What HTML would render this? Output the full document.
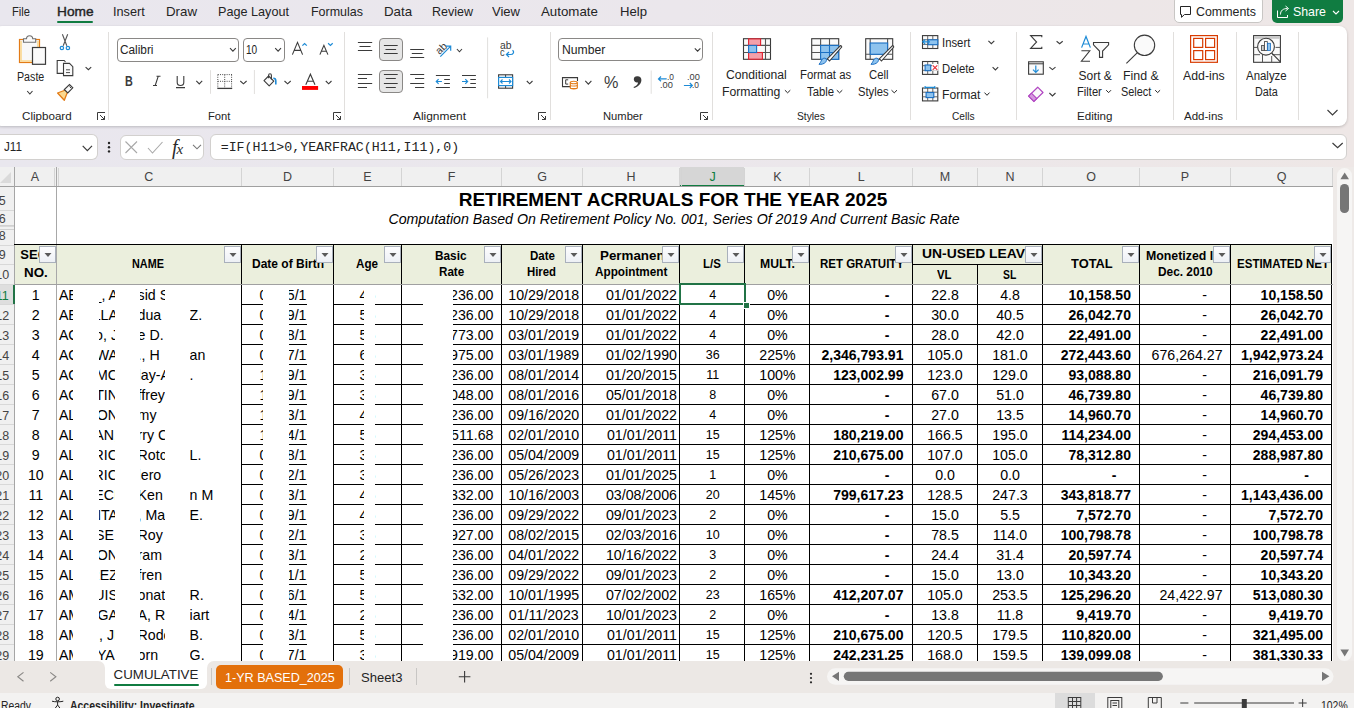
<!DOCTYPE html>
<html><head><meta charset="utf-8"><title>Excel</title>
<style>
html,body{margin:0;padding:0;width:1354px;height:708px;overflow:hidden;background:#ece8ea}
body{position:relative;font-family:"Liberation Sans",sans-serif}
body>div{position:absolute}
.t{position:absolute;white-space:nowrap}
</style></head><body>
<div style="left:0;top:0;width:1354px;height:708px;background:linear-gradient(90deg,#e9e7ee 0%,#ebe7ec 50%,#eee7e6 100%)"></div>
<div class="t" style="left:11.50px;top:4.93px;font-size:13.3px;line-height:13.3px;font-family:'Liberation Sans',sans-serif;font-weight:normal;font-style:normal;color:#242424;transform:scaleX(0.8399);transform-origin:0 0;">File</div>
<div class="t" style="left:56.60px;top:4.93px;font-size:13.3px;line-height:13.3px;font-family:'Liberation Sans',sans-serif;font-weight:normal;font-style:normal;color:#242424;transform:scaleX(1.0316);transform-origin:0 0;-webkit-text-stroke:0.4px #242424;">Home</div>
<div class="t" style="left:113.00px;top:4.93px;font-size:13.3px;line-height:13.3px;font-family:'Liberation Sans',sans-serif;font-weight:normal;font-style:normal;color:#242424;transform:scaleX(0.9560);transform-origin:0 0;">Insert</div>
<div class="t" style="left:166.00px;top:4.93px;font-size:13.3px;line-height:13.3px;font-family:'Liberation Sans',sans-serif;font-weight:normal;font-style:normal;color:#242424;">Draw</div>
<div class="t" style="left:218.00px;top:4.93px;font-size:13.3px;line-height:13.3px;font-family:'Liberation Sans',sans-serif;font-weight:normal;font-style:normal;color:#242424;transform:scaleX(0.9506);transform-origin:0 0;">Page Layout</div>
<div class="t" style="left:311.00px;top:4.93px;font-size:13.3px;line-height:13.3px;font-family:'Liberation Sans',sans-serif;font-weight:normal;font-style:normal;color:#242424;transform:scaleX(0.9381);transform-origin:0 0;">Formulas</div>
<div class="t" style="left:384.00px;top:4.93px;font-size:13.3px;line-height:13.3px;font-family:'Liberation Sans',sans-serif;font-weight:normal;font-style:normal;color:#242424;">Data</div>
<div class="t" style="left:432.00px;top:4.93px;font-size:13.3px;line-height:13.3px;font-family:'Liberation Sans',sans-serif;font-weight:normal;font-style:normal;color:#242424;transform:scaleX(0.9402);transform-origin:0 0;">Review</div>
<div class="t" style="left:492.00px;top:4.93px;font-size:13.3px;line-height:13.3px;font-family:'Liberation Sans',sans-serif;font-weight:normal;font-style:normal;color:#242424;transform:scaleX(0.9794);transform-origin:0 0;">View</div>
<div class="t" style="left:541.00px;top:4.93px;font-size:13.3px;line-height:13.3px;font-family:'Liberation Sans',sans-serif;font-weight:normal;font-style:normal;color:#242424;">Automate</div>
<div class="t" style="left:620.00px;top:4.93px;font-size:13.3px;line-height:13.3px;font-family:'Liberation Sans',sans-serif;font-weight:normal;font-style:normal;color:#242424;transform:scaleX(0.9870);transform-origin:0 0;">Help</div>
<div style="left:56.5px;top:21px;width:36.5px;height:2.2px;background:#107c41;border-radius:1px"></div>
<div style="left:1174px;top:-4px;width:89px;height:26.5px;background:#fff;border:1px solid #c8c6c4;border-radius:5px;box-sizing:border-box"></div>
<svg style="position:absolute;left:1179px;top:5px;" width="16" height="14" viewBox="0 0 16 14"><path d="M1.5 1.5h10v8h-6l-3 2.8v-2.8h-1z" fill="none" stroke="#242424" stroke-width="1" stroke-linejoin="round"/></svg>
<div class="t" style="left:1195.50px;top:5.03px;font-size:13.3px;line-height:13.3px;font-family:'Liberation Sans',sans-serif;font-weight:normal;font-style:normal;color:#242424;transform:scaleX(0.9331);transform-origin:0 0;">Comments</div>
<div style="left:1272px;top:-4px;width:71px;height:27px;background:#107c41;border-radius:5px"></div>
<svg style="position:absolute;left:1276px;top:4px;" width="16" height="14" viewBox="0 0 16 14"><path d="M1.5 6.5v7h10v-2.5" fill="none" stroke="#fff" stroke-width="1"/><path d="M4.5 10.5c0-4 2.5-6 7-6M9.5 2l3 2.5-3 2.5" fill="none" stroke="#fff" stroke-width="1"/></svg>
<div class="t" style="left:1293.00px;top:5.03px;font-size:13.3px;line-height:13.3px;font-family:'Liberation Sans',sans-serif;font-weight:normal;font-style:normal;color:#fff;transform:scaleX(0.9298);transform-origin:0 0;">Share</div>
<svg style="position:absolute;left:1332px;top:9.5px;" width="8" height="5" viewBox="0 0 8 5"><path d="M1 1l3 3L7 1" fill="none" stroke="#fff" stroke-width="1.1"/></svg>
<div style="left:-6px;top:25.7px;width:1353px;height:100.3px;background:#fff;border-radius:8px;box-shadow:0 1px 3px rgba(0,0,0,.2)"></div>
<div class="t" style="left:21.70px;top:110.68px;font-size:11px;line-height:11px;font-family:'Liberation Sans',sans-serif;font-weight:normal;font-style:normal;color:#242424;transform:scaleX(1.0555);transform-origin:0 0;">Clipboard</div>
<div class="t" style="left:207.80px;top:110.68px;font-size:11px;line-height:11px;font-family:'Liberation Sans',sans-serif;font-weight:normal;font-style:normal;color:#242424;transform:scaleX(1.0177);transform-origin:0 0;">Font</div>
<div class="t" style="left:413.00px;top:110.68px;font-size:11px;line-height:11px;font-family:'Liberation Sans',sans-serif;font-weight:normal;font-style:normal;color:#242424;transform:scaleX(1.0835);transform-origin:0 0;">Alignment</div>
<div class="t" style="left:603.00px;top:110.68px;font-size:11px;line-height:11px;font-family:'Liberation Sans',sans-serif;font-weight:normal;font-style:normal;color:#242424;transform:scaleX(1.0173);transform-origin:0 0;">Number</div>
<div class="t" style="left:796.50px;top:110.68px;font-size:11px;line-height:11px;font-family:'Liberation Sans',sans-serif;font-weight:normal;font-style:normal;color:#242424;transform:scaleX(0.9314);transform-origin:0 0;">Styles</div>
<div class="t" style="left:951.60px;top:110.68px;font-size:11px;line-height:11px;font-family:'Liberation Sans',sans-serif;font-weight:normal;font-style:normal;color:#242424;transform:scaleX(0.9243);transform-origin:0 0;">Cells</div>
<div class="t" style="left:1077.00px;top:110.68px;font-size:11px;line-height:11px;font-family:'Liberation Sans',sans-serif;font-weight:normal;font-style:normal;color:#242424;transform:scaleX(1.0554);transform-origin:0 0;">Editing</div>
<div class="t" style="left:1184.20px;top:110.68px;font-size:11px;line-height:11px;font-family:'Liberation Sans',sans-serif;font-weight:normal;font-style:normal;color:#242424;transform:scaleX(1.0483);transform-origin:0 0;">Add-ins</div>
<div style="left:108.4px;top:32px;width:1px;height:88px;background:#e1dfdd"></div>
<div style="left:344.4px;top:32px;width:1px;height:88px;background:#e1dfdd"></div>
<div style="left:549.6px;top:32px;width:1px;height:88px;background:#e1dfdd"></div>
<div style="left:711.6px;top:32px;width:1px;height:88px;background:#e1dfdd"></div>
<div style="left:909.6px;top:32px;width:1px;height:88px;background:#e1dfdd"></div>
<div style="left:1015.5px;top:32px;width:1px;height:88px;background:#e1dfdd"></div>
<div style="left:1172.5px;top:32px;width:1px;height:88px;background:#e1dfdd"></div>
<div style="left:1235.5px;top:32px;width:1px;height:88px;background:#e1dfdd"></div>
<div style="left:1297.8px;top:32px;width:1px;height:88px;background:#e1dfdd"></div>
<div class="t" style="left:16.70px;top:70.64px;font-size:12px;line-height:12px;font-family:'Liberation Sans',sans-serif;font-weight:normal;font-style:normal;color:#242424;transform:scaleX(0.8896);transform-origin:0 0;">Paste</div>
<div style="left:117.3px;top:38.3px;width:122px;height:23.3px;border:1px solid #8a8886;border-radius:4px;box-sizing:border-box;background:#fff"></div>
<div style="left:242.5px;top:38.3px;width:42px;height:23.3px;border:1px solid #8a8886;border-radius:4px;box-sizing:border-box;background:#fff"></div>
<div class="t" style="left:120.40px;top:43.71px;font-size:12.5px;line-height:12.5px;font-family:'Liberation Sans',sans-serif;font-weight:normal;font-style:normal;color:#242424;transform:scaleX(0.9456);transform-origin:0 0;">Calibri</div>
<div class="t" style="left:245.80px;top:43.71px;font-size:12.5px;line-height:12.5px;font-family:'Liberation Sans',sans-serif;font-weight:normal;font-style:normal;color:#242424;transform:scaleX(0.8055);transform-origin:0 0;">10</div>
<div class="t" style="left:125.30px;top:74.04px;font-size:14px;line-height:14px;font-family:'Liberation Sans',sans-serif;font-weight:bold;font-style:normal;color:#3b3b3b;transform:scaleX(0.7715);transform-origin:0 0;">B</div>
<div style="left:379px;top:38.2px;width:23.5px;height:23.2px;background:#e6e6e6;border:1px solid #8a8886;border-radius:4px;box-sizing:border-box"></div>
<div style="left:379px;top:70.2px;width:23.5px;height:23.2px;background:#e6e6e6;border:1px solid #8a8886;border-radius:4px;box-sizing:border-box"></div>
<div class="t" style="left:434px;top:40px;font-size:10.5px;line-height:10.5px;font-family:'Liberation Sans',sans-serif;color:#3b3b3b;transform:rotate(-45deg);transform-origin:50% 50%;width:14px;text-align:center;margin-top:3px">ab</div>
<div class="t" style="left:500.40px;top:40.53px;font-size:10px;line-height:10px;font-family:'Liberation Sans',sans-serif;font-weight:normal;font-style:normal;color:#3b3b3b;transform:scaleX(1.0339);transform-origin:0 0;">ab</div>
<div class="t" style="left:500.40px;top:48.13px;font-size:10px;line-height:10px;font-family:'Liberation Sans',sans-serif;font-weight:normal;font-style:normal;color:#3b3b3b;transform:scaleX(0.9200);transform-origin:0 0;">c</div>
<div style="left:558.4px;top:38.4px;width:145.1px;height:22.9px;border:1px solid #8a8886;border-radius:4px;box-sizing:border-box;background:#fff"></div>
<div class="t" style="left:561.70px;top:43.71px;font-size:12.5px;line-height:12.5px;font-family:'Liberation Sans',sans-serif;font-weight:normal;font-style:normal;color:#242424;transform:scaleX(0.9739);transform-origin:0 0;">Number</div>
<div class="t" style="left:603.60px;top:73.90px;font-size:17px;line-height:17px;font-family:'Liberation Sans',sans-serif;font-weight:normal;font-style:normal;color:#3b3b3b;transform:scaleX(0.9527);transform-origin:0 0;">%</div>
<div class="t" style="left:667.20px;top:72.45px;font-size:9.5px;line-height:9.5px;font-family:'Liberation Sans',sans-serif;font-weight:normal;font-style:normal;color:#3b3b3b;transform:scaleX(0.8835);transform-origin:0 0;">.0</div>
<div class="t" style="left:660.30px;top:80.25px;font-size:9.5px;line-height:9.5px;font-family:'Liberation Sans',sans-serif;font-weight:normal;font-style:normal;color:#3b3b3b;transform:scaleX(0.9768);transform-origin:0 0;">.00</div>
<div class="t" style="left:686.50px;top:72.45px;font-size:9.5px;line-height:9.5px;font-family:'Liberation Sans',sans-serif;font-weight:normal;font-style:normal;color:#3b3b3b;transform:scaleX(0.9768);transform-origin:0 0;">.00</div>
<div class="t" style="left:692.20px;top:80.25px;font-size:9.5px;line-height:9.5px;font-family:'Liberation Sans',sans-serif;font-weight:normal;font-style:normal;color:#3b3b3b;transform:scaleX(0.8835);transform-origin:0 0;">.0</div>
<div class="t" style="left:726.40px;top:69.34px;font-size:12px;line-height:12px;font-family:'Liberation Sans',sans-serif;font-weight:normal;font-style:normal;color:#242424;transform:scaleX(1.0126);transform-origin:0 0;">Conditional</div>
<div class="t" style="left:722.40px;top:85.64px;font-size:12px;line-height:12px;font-family:'Liberation Sans',sans-serif;font-weight:normal;font-style:normal;color:#242424;transform:scaleX(1.0182);transform-origin:0 0;">Formatting</div>
<div class="t" style="left:799.60px;top:69.34px;font-size:12px;line-height:12px;font-family:'Liberation Sans',sans-serif;font-weight:normal;font-style:normal;color:#242424;transform:scaleX(0.9479);transform-origin:0 0;">Format as</div>
<div class="t" style="left:806.60px;top:85.64px;font-size:12px;line-height:12px;font-family:'Liberation Sans',sans-serif;font-weight:normal;font-style:normal;color:#242424;transform:scaleX(0.9411);transform-origin:0 0;">Table</div>
<div class="t" style="left:869.40px;top:69.34px;font-size:12px;line-height:12px;font-family:'Liberation Sans',sans-serif;font-weight:normal;font-style:normal;color:#242424;transform:scaleX(0.9384);transform-origin:0 0;">Cell</div>
<div class="t" style="left:858.20px;top:85.64px;font-size:12px;line-height:12px;font-family:'Liberation Sans',sans-serif;font-weight:normal;font-style:normal;color:#242424;transform:scaleX(0.9333);transform-origin:0 0;">Styles</div>
<div class="t" style="left:942.40px;top:37.04px;font-size:12px;line-height:12px;font-family:'Liberation Sans',sans-serif;font-weight:normal;font-style:normal;color:#242424;transform:scaleX(0.9430);transform-origin:0 0;">Insert</div>
<div class="t" style="left:942.40px;top:63.24px;font-size:12px;line-height:12px;font-family:'Liberation Sans',sans-serif;font-weight:normal;font-style:normal;color:#242424;transform:scaleX(0.9398);transform-origin:0 0;">Delete</div>
<div class="t" style="left:942.40px;top:88.64px;font-size:12px;line-height:12px;font-family:'Liberation Sans',sans-serif;font-weight:normal;font-style:normal;color:#242424;transform:scaleX(1.0130);transform-origin:0 0;">Format</div>
<div class="t" style="left:1078.50px;top:70.14px;font-size:12px;line-height:12px;font-family:'Liberation Sans',sans-serif;font-weight:normal;font-style:normal;color:#242424;">Sort &amp;</div>
<div class="t" style="left:1077.00px;top:85.84px;font-size:12px;line-height:12px;font-family:'Liberation Sans',sans-serif;font-weight:normal;font-style:normal;color:#242424;transform:scaleX(0.9300);transform-origin:0 0;">Filter</div>
<div class="t" style="left:1123.00px;top:70.14px;font-size:12px;line-height:12px;font-family:'Liberation Sans',sans-serif;font-weight:normal;font-style:normal;color:#242424;transform:scaleX(1.0322);transform-origin:0 0;">Find &amp;</div>
<div class="t" style="left:1120.60px;top:85.84px;font-size:12px;line-height:12px;font-family:'Liberation Sans',sans-serif;font-weight:normal;font-style:normal;color:#242424;transform:scaleX(0.9085);transform-origin:0 0;">Select</div>
<div class="t" style="left:1183.30px;top:70.14px;font-size:12px;line-height:12px;font-family:'Liberation Sans',sans-serif;font-weight:normal;font-style:normal;color:#242424;transform:scaleX(1.0248);transform-origin:0 0;">Add-ins</div>
<div class="t" style="left:1246.30px;top:70.14px;font-size:12px;line-height:12px;font-family:'Liberation Sans',sans-serif;font-weight:normal;font-style:normal;color:#242424;transform:scaleX(0.9533);transform-origin:0 0;">Analyze</div>
<div class="t" style="left:1255.40px;top:86.44px;font-size:12px;line-height:12px;font-family:'Liberation Sans',sans-serif;font-weight:normal;font-style:normal;color:#242424;transform:scaleX(0.8995);transform-origin:0 0;">Data</div>
<svg style="position:absolute;left:0px;top:0px;pointer-events:none" width="1354" height="130" viewBox="0 0 1354 130"><path d="M97.5 120V112.5H105" fill="none" stroke="#3b3b3b" stroke-width="1"/><path d="M100 115L104.5 119.5M104.5 116V119.5H101" fill="none" stroke="#3b3b3b" stroke-width="1"/><path d="M333.5 120V112.5H341" fill="none" stroke="#3b3b3b" stroke-width="1"/><path d="M336 115L340.5 119.5M340.5 116V119.5H337" fill="none" stroke="#3b3b3b" stroke-width="1"/><path d="M538.5 120V112.5H546" fill="none" stroke="#3b3b3b" stroke-width="1"/><path d="M541 115L545.5 119.5M545.5 116V119.5H542" fill="none" stroke="#3b3b3b" stroke-width="1"/><path d="M700.5 120V112.5H708" fill="none" stroke="#3b3b3b" stroke-width="1"/><path d="M703 115L707.5 119.5M707.5 116V119.5H704" fill="none" stroke="#3b3b3b" stroke-width="1"/><rect x="19.5" y="39.5" width="20" height="23" fill="#f8f8f8" stroke="#e37b16" stroke-width="1.2"/><path d="M21 41v20h11M38 41v8" fill="none" stroke="#fbd88f" stroke-width="1.6"/><path d="M23.5 42.2V38.8h3a3 3 0 0 1 6.2 0h3v3.4z" fill="#fafafa" stroke="#707070" stroke-width="1.1"/><rect x="32.5" y="47.5" width="13" height="16.8" fill="#fafafa" stroke="#3b3b3b" stroke-width="1.2"/><path d="M27.2 91L29.85 94L32.5 91" fill="none" stroke="#3b3b3b" stroke-width="1.1"/><path d="M62.4 34.2L66.8 45.8M67.7 34.2L63.2 45.8" stroke="#555" stroke-width="1.1" fill="none"/><circle cx="61.9" cy="48" r="1.7" fill="none" stroke="#1e8bd6" stroke-width="1.2"/><circle cx="67.9" cy="48" r="1.7" fill="none" stroke="#1e8bd6" stroke-width="1.2"/><path d="M63.3 73.4H57.2V60.5H64.2L65.5 62" fill="none" stroke="#3b3b3b" stroke-width="1.1"/><path d="M63.5 75.6V63.4H69.5L72.8 66.7V75.6z" fill="#fafafa" stroke="#3b3b3b" stroke-width="1.1"/><path d="M66 69.8h4M66 72.6h4" stroke="#3b3b3b" stroke-width="0.9"/><path d="M85.6 67.1L88.4 69.7L91.2 67.1" fill="none" stroke="#3b3b3b" stroke-width="1.1"/><path d="M57.6 93L64.3 100.2L67.5 92L65.5 90z" fill="#fbd88f" stroke="#e37b16" stroke-width="1.3" stroke-linejoin="round"/><path d="M64.3 89.5L67.8 93L72.8 87.8L69.5 84.5z" fill="#fafafa" stroke="#3b3b3b" stroke-width="1.1"/><path d="M69.5 86.5l1.8 1.8" stroke="#3b3b3b" stroke-width="1"/><path d="M230 48.2L232.9 51.2L235.8 48.2" fill="none" stroke="#3b3b3b" stroke-width="1.1"/><path d="M275.2 48.2L278.1 51.2L281 48.2" fill="none" stroke="#3b3b3b" stroke-width="1.1"/><path d="M292.4 54.6L297.5 42.4L302.6 54.6M294.2 50.4H300.8" fill="none" stroke="#3b3b3b" stroke-width="1.1"/><path d="M302.4 45.7L304.6 43.5L306.8 45.7" fill="none" stroke="#1e8bd6" stroke-width="1.2"/><path d="M319.9 54.6L323.9 45.3L327.9 54.6M321.3 51.3H326.5" fill="none" stroke="#3b3b3b" stroke-width="1.1"/><path d="M328.1 43.3L330.4 45.5L332.7 43.3" fill="none" stroke="#1e8bd6" stroke-width="1.2"/><path d="M153 85.5h4M156.5 76.3h4M155.2 85.5L158.2 76.3" fill="none" stroke="#3b3b3b" stroke-width="1.1"/><path d="M177.2 76v6.2a3.3 3.3 0 0 0 6.6 0V76M176 87.6h9" fill="none" stroke="#3b3b3b" stroke-width="1.1"/><path d="M196.3 80.9L199.25 83.9L202.2 80.9" fill="none" stroke="#3b3b3b" stroke-width="1.1"/><path d="M210.5 70.2V93.8M254.4 70V94" stroke="#e1dfdd" stroke-width="1"/><path d="M217.8 74.6H232M217.8 74.6V88M231.6 74.6V88M217.8 81.3H232M224.7 74.6V88" fill="none" stroke="#3b3b3b" stroke-width="0.9" stroke-dasharray="1 1.2"/><path d="M217.3 88.4H232.2" stroke="#3b3b3b" stroke-width="1.3"/><path d="M240.3 81L243.45 83.8L246.6 81" fill="none" stroke="#3b3b3b" stroke-width="1.1"/><path d="M264 80.6L268.6 76L273.8 81.2L269.2 85.8z" fill="#fafafa" stroke="#3b3b3b" stroke-width="1.1" stroke-linejoin="round"/><path d="M268.6 78.2V75.2a1.4 1.4 0 0 1 2.8 0V79.5" fill="none" stroke="#3b3b3b" stroke-width="1.1"/><path d="M273.3 78.2c1.6 0 2.5 1.1 2.5 2.6v3.6" fill="none" stroke="#1e8bd6" stroke-width="1.6"/><path d="M284.5 81L287.6 83.8L290.7 81" fill="none" stroke="#3b3b3b" stroke-width="1.1"/><path d="M305.8 84.8L310.4 74.2L315 84.8M307.4 81.2H313.4" fill="none" stroke="#3b3b3b" stroke-width="1.1"/><rect x="302" y="86" width="16.1" height="3.9" fill="#ff0000"/><path d="M325.8 81L328.65 83.8L331.5 81" fill="none" stroke="#3b3b3b" stroke-width="1.1"/><path d="M357.9 42.5H372.2M359.5 46.5H370.6M357.9 50.5H372.2" stroke="#3b3b3b" stroke-width="1" fill="none"/><path d="M383.9 45.5H397.7M385.5 49.5H396.1M383.9 53.5H397.7" stroke="#3b3b3b" stroke-width="1" fill="none"/><path d="M410.2 49.5H424.2M411.8 53.5H422.6M410.2 57.5H424.2" stroke="#3b3b3b" stroke-width="1" fill="none"/><path d="M357.9 74.5H372.2M357.9 78.5H367M357.9 83.5H372.2M357.9 87.5H367" stroke="#3b3b3b" stroke-width="1" fill="none"/><path d="M383.9 74.5H397.7M385.8 78.5H395.8M383.9 83.5H397.7M385.8 87.5H395.8" stroke="#3b3b3b" stroke-width="1" fill="none"/><path d="M410.2 74.5H424.2M415 78.5H424.2M410.2 83.5H424.2M415 87.5H424.2" stroke="#3b3b3b" stroke-width="1" fill="none"/><path d="M440.3 56.6L450.7 46.1M446 46.1h4.7v4.7" fill="none" stroke="#1e8bd6" stroke-width="1.2"/><path d="M456.9 49L459.45 51.8L462 49" fill="none" stroke="#3b3b3b" stroke-width="1.1"/><path d="M487.6 37.4V98.3" stroke="#e1dfdd" stroke-width="1"/><path d="M512.5 50.2c2 1.5 1 4.3-2 4.3H506.5M509 52l-2.6 2.5L509 57" fill="none" stroke="#1e8bd6" stroke-width="1.2"/><path d="M435.9 75.5H449.9M444.2 79.5H449.9M444.2 83.5H449.9M435.9 87.5H449.9" stroke="#3b3b3b" stroke-width="1" fill="none"/><path d="M441.9 81.5H436.3M438.6 79.2L436.3 81.5L438.6 83.8" fill="none" stroke="#1e8bd6" stroke-width="1.2"/><path d="M462 75.5H475.9M470.3 79.5H475.9M470.3 83.5H475.9M462 87.5H475.9" stroke="#3b3b3b" stroke-width="1" fill="none"/><path d="M462 81.5H467.6M465.3 79.2L467.6 81.5L465.3 83.8" fill="none" stroke="#1e8bd6" stroke-width="1.2"/><rect x="498.6" y="74.8" width="14" height="13.4" fill="none" stroke="#3b3b3b" stroke-width="1.1"/><path d="M505.6 74.8v2.6M505.6 85.6v2.6" stroke="#3b3b3b" stroke-width="1"/><rect x="498.6" y="77.4" width="14" height="8.2" fill="#fff" stroke="#1e8bd6" stroke-width="1.2"/><path d="M500.5 81.5H511M502.5 79.5l-2 2 2 2M509 79.5l2 2-2 2" fill="none" stroke="#1e8bd6" stroke-width="1.1"/><path d="M526.8 81L529.65 83.8L532.5 81" fill="none" stroke="#3b3b3b" stroke-width="1.1"/><path d="M694.8 48.4L697.5999999999999 51.2L700.4 48.4" fill="none" stroke="#3b3b3b" stroke-width="1.1"/><path d="M576 86.6H562.5V77.6H577.5V81" fill="none" stroke="#3b3b3b" stroke-width="1.1"/><path d="M568.2 79.8h-2.5v4.3h2.5" fill="none" stroke="#3b3b3b" stroke-width="1"/><path d="M570.3 82.5v5.6c0 1 7 1 7 0v-5.6" fill="#fff" stroke="#e37b16" stroke-width="1.2"/><ellipse cx="573.8" cy="82.5" rx="3.5" ry="1.2" fill="#fff" stroke="#e37b16" stroke-width="1.1"/><path d="M570.3 85.3c0 1 7 1 7 0" fill="none" stroke="#e37b16" stroke-width="1"/><path d="M585.3 80.9L588.3499999999999 84.2L591.4 80.9" fill="none" stroke="#3b3b3b" stroke-width="1.1"/><path d="M637.6 76.2c2.3 0 3.8 1.6 3.8 3.9c0 3.6-2.8 6.6-7.4 8l-.5-1.1c2.6-1 4.3-2.7 4.6-4.6c-.2 .1-.4 .1-.6 .1a3.2 3.2 0 1 1 .1-6.3z" fill="#3b3b3b"/><path d="M651.2 70.5V93.8" stroke="#e1dfdd" stroke-width="1"/><path d="M666.7 78.9H658.5M661 76.5l-2.5 2.4 2.5 2.4" fill="none" stroke="#1e8bd6" stroke-width="1.2"/><path d="M683.9 85.5H692.3M689.8 83l2.5 2.5-2.5 2.5" fill="none" stroke="#1e8bd6" stroke-width="1.2"/><g stroke-width="1.1"><rect x="743.5" y="38.7" width="27" height="20.6" fill="#fafafa" stroke="#3b3b3b"/><path d="M743.5 45.4H770.5M743.5 52.5H770.5M765.5 38.7V59.3" stroke="#555" fill="none"/><rect x="748.6" y="38.9" width="12" height="6.5" fill="#f4a0aa" stroke="#e0202e"/><rect x="748.6" y="52.5" width="13.8" height="6.7" fill="#f4a0aa" stroke="#e0202e"/><rect x="748.6" y="45.4" width="8" height="7.1" fill="#8ec3ee" stroke="#1a6fc4"/><rect x="811.7" y="38.7" width="27" height="20.6" fill="#fafafa" stroke="#3b3b3b"/><path d="M811.7 45.4H838.7M811.7 52.5H838.7M820.6 38.7V59.3M829.5 38.7V59.3" stroke="#555" fill="none"/><rect x="820.6" y="45.4" width="18.1" height="13.9" fill="#8ec3ee" stroke="#1a6fc4"/><path d="M820.6 52.5H838.7M829.5 45.4V59.3" stroke="#1a6fc4"/><rect x="865.7" y="38.7" width="27" height="20.6" fill="#fafafa" stroke="#3b3b3b"/><path d="M870.2 38.7V59.3M887.6 38.7V54.3M865.7 54.3H892.7" stroke="#555" fill="none"/><rect x="870.2" y="43" width="17.4" height="11.3" fill="#8ec3ee" stroke="#1a6fc4"/></g><path d="M827.3 58.8L840.5 45.6a1.3 1.3 0 0 1 1.2 1.5L829.5 61z" fill="#fff" stroke="#3b3b3b" stroke-width="1.1"/><path d="M819 64.3c2.5.3 5-.5 6.5-2c1-1.2 1.3-2.5.5-3.5c-1-1-2.5-.8-3.7.3c-1.2 1.2-1.2 3-3.3 5.2z" fill="#8ec3ee" stroke="#1a6fc4" stroke-width="1"/><path d="M879.3 58.8L892.5 45.6a1.3 1.3 0 0 1 1.2 1.5L881.5 61z" fill="#fff" stroke="#3b3b3b" stroke-width="1.1"/><path d="M871 64.3c2.5.3 5-.5 6.5-2c1-1.2 1.3-2.5.5-3.5c-1-1-2.5-.8-3.7.3c-1.2 1.2-1.2 3-3.3 5.2z" fill="#8ec3ee" stroke="#1a6fc4" stroke-width="1"/><path d="M784.9 90.2L787.5999999999999 92.8L790.3 90.2" fill="none" stroke="#242424" stroke-width="1"/><path d="M836.8 90.2L839.55 92.8L842.3 90.2" fill="none" stroke="#242424" stroke-width="1"/><path d="M891.5 90.2L894.25 92.8L897 90.2" fill="none" stroke="#242424" stroke-width="1"/><rect x="922.5" y="35.6" width="15.3" height="12.9" fill="#fafafa" stroke="#3b3b3b" stroke-width="1.1"/><path d="M922.5 39.800000000000004H937.8M922.5 44.400000000000006H937.8M927.7 35.6V48.5M932.8 35.6V48.5" stroke="#555" stroke-width="0.9"/><rect x="922.5" y="61.5" width="15.3" height="12.9" fill="#fafafa" stroke="#3b3b3b" stroke-width="1.1"/><path d="M922.5 65.7H937.8M922.5 70.3H937.8M927.7 61.5V74.4M932.8 61.5V74.4" stroke="#555" stroke-width="0.9"/><rect x="922.5" y="88" width="15.3" height="12.9" fill="#fafafa" stroke="#3b3b3b" stroke-width="1.1"/><path d="M922.5 92.2H937.8M922.5 96.8H937.8M927.7 88V100.9M932.8 88V100.9" stroke="#555" stroke-width="0.9"/><rect x="928.2" y="39.8" width="9.6" height="4.9" fill="#8ec3ee" stroke="#1a6fc4" stroke-width="1.1"/><path d="M930 41.8H922.8M925.3 39.3l-2.5 2.5 2.5 2.5" fill="none" stroke="#1e8bd6" stroke-width="1.2"/><rect x="932" y="64" width="6.5" height="6.7" fill="#fff"/><rect x="925.1" y="65" width="5.6" height="5.7" fill="#8ec3ee" stroke="#1a6fc4" stroke-width="1.1"/><path d="M932.7 65.3l4.6 4.6M937.3 65.3l-4.6 4.6" stroke="#e8323c" stroke-width="1.2"/><rect x="926.1" y="92.5" width="7.7" height="5.1" fill="#8ec3ee" stroke="#1a6fc4" stroke-width="1.1"/><rect x="924" y="85" width="12" height="2.4" fill="#fff"/><path d="M925.1 87.4H934.8M925.1 86v2.8M934.8 86v2.8" fill="none" stroke="#1e8bd6" stroke-width="1.1"/><path d="M988.4 40.8L991.3499999999999 43.7L994.3 40.8" fill="none" stroke="#3b3b3b" stroke-width="1.1"/><path d="M992.6 67.2L995.4000000000001 70L998.2 67.2" fill="none" stroke="#3b3b3b" stroke-width="1.1"/><path d="M984.5 92.6L987.0 95.3L989.5 92.6" fill="none" stroke="#242424" stroke-width="1"/><path d="M1041.8 37.2V35.6H1030.6L1036.6 42L1030.6 48.4H1041.8V46.8" fill="none" stroke="#3b3b3b" stroke-width="1.1" stroke-linejoin="miter"/><path d="M1056.6 41.2L1059.65 43.7L1062.7 41.2" fill="none" stroke="#3b3b3b" stroke-width="1.1"/><rect x="1028.6" y="61.8" width="14.7" height="12.4" fill="#fafafa" stroke="#3b3b3b" stroke-width="1.1"/><path d="M1028.6 63.8H1043.3" stroke="#3b3b3b" stroke-width="1"/><path d="M1035.8 65.5V72.5M1033 69.7l2.8 2.8 2.8-2.8" fill="none" stroke="#1e8bd6" stroke-width="1.2"/><path d="M1049.4 67.1L1052.45 69.6L1055.5 67.1" fill="none" stroke="#3b3b3b" stroke-width="1.1"/><path d="M1028.6 96.1L1037.7 87.2L1043 92.5L1033.9 101.4z" fill="#fafafa" stroke="#b146c2" stroke-width="1.2" stroke-linejoin="round"/><path d="M1028.6 96.1L1031.5 93.2L1036.8 98.5L1033.9 101.4z" fill="#d59ade" stroke="#b146c2" stroke-width="1.1"/><path d="M1049.4 93L1052.45 96L1055.5 93" fill="none" stroke="#3b3b3b" stroke-width="1.1"/><path d="M1081.6 47.6L1086 36.5L1090.4 47.6M1083 44H1089" fill="none" stroke="#1e8bd6" stroke-width="1.2"/><path d="M1081.4 50.8H1089.8L1081.4 61.2H1090" fill="none" stroke="#3b3b3b" stroke-width="1.1"/><path d="M1093.5 42.5H1108.6V44.8L1102.6 51V57.4H1099.5V51L1093.5 44.8z" fill="#fafafa" stroke="#3b3b3b" stroke-width="1.1"/><circle cx="1144.5" cy="45.3" r="10.2" fill="#fafafa" stroke="#3b3b3b" stroke-width="1.1"/><path d="M1137.4 52.6L1126.4 63.4" stroke="#3b3b3b" stroke-width="1.1"/><path d="M1106.2 90.2L1108.6 92.6L1111 90.2" fill="none" stroke="#242424" stroke-width="1"/><path d="M1155.2 90.2L1157.65 92.6L1160.1 90.2" fill="none" stroke="#242424" stroke-width="1"/><g fill="none" stroke="#d83b01" stroke-width="1.2"><rect x="1190.6" y="35.6" width="26.8" height="26.7"/><rect x="1193.7" y="38.4" width="9" height="9"/><rect x="1205.6" y="38.4" width="9" height="9"/><rect x="1193.7" y="50.6" width="9" height="9"/><rect x="1205.6" y="50.6" width="9" height="9"/></g><rect x="1253.6" y="35.6" width="26.8" height="26.7" fill="#fafafa" stroke="#3b3b3b" stroke-width="1.1"/><rect x="1254.2" y="36.2" width="25.6" height="2.6" fill="#c8c8c8"/><path d="M1253.6 47.4H1257.5M1275.5 47.4H1280.4M1253.6 54.7H1260M1272 54.7H1280.4M1262.5 54.7V62.3M1271.7 56V62.3" stroke="#555" stroke-width="1"/><circle cx="1266" cy="46.7" r="8.4" fill="#fafafa" stroke="#3b3b3b" stroke-width="1.1"/><path d="M1271.8 53.2L1280.6 62.2" stroke="#3b3b3b" stroke-width="1.2"/><rect x="1261.6" y="45.6" width="2.6" height="4.8" fill="#d0d0d0" stroke="#3b3b3b" stroke-width="0.8"/><rect x="1264.5" y="41.6" width="2.8" height="8.8" fill="#fff" stroke="#3b3b3b" stroke-width="0.8"/><rect x="1267.6" y="43.3" width="3" height="7.2" fill="#8ec3ee" stroke="#1a6fc4" stroke-width="0.8"/><path d="M1327.5 110L1332.5 115L1337.5 110" fill="none" stroke="#3b3b3b" stroke-width="1.1"/></svg>
<div style="left:0px;top:134px;width:98px;height:25.5px;background:#fff;border:1px solid #d2d0ce;border-radius:0 6px 6px 0;box-sizing:border-box;border-left:none"></div>
<div class="t" style="left:4.00px;top:141.11px;font-size:12.5px;line-height:12.5px;font-family:'Liberation Sans',sans-serif;font-weight:normal;font-style:normal;color:#242424;transform:scaleX(0.9362);transform-origin:0 0;">J11</div>
<div style="left:120px;top:134.5px;width:84px;height:25px;background:#fff;border:1px solid #d2d0ce;border-radius:6px;box-sizing:border-box"></div>
<div class="t" style="left:172px;top:136px;font-size:20px;line-height:22px;font-family:'Liberation Serif',serif;font-style:italic;color:#2b2b2b">f<span style="font-size:15px;margin-left:-1px">x</span></div>
<div style="left:209.5px;top:134px;width:1137.5px;height:25.5px;background:#fff;border:1px solid #d2d0ce;border-radius:6px;box-sizing:border-box"></div>
<div class="t" style="left:220.70px;top:141.28px;font-size:13.25px;line-height:13.25px;font-family:'Liberation Mono',monospace;font-weight:normal;font-style:normal;color:#242424;">=IF(H11&gt;0,YEARFRAC(H11,I11),0)</div>
<svg style="position:absolute;left:0px;top:0px;pointer-events:none" width="1354" height="170" viewBox="0 0 1354 170"><path d="M82.7 145.8L87.35 150.7L92 145.8" fill="none" stroke="#3b3b3b" stroke-width="1.2"/><circle cx="109" cy="143" r="1.2" fill="#242424"/><circle cx="109" cy="147.2" r="1.2" fill="#242424"/><circle cx="109" cy="151.4" r="1.2" fill="#242424"/><path d="M125.5 141.5l11.5 11.5M137 141.5L125.5 153" stroke="#a8a8a8" stroke-width="1.1"/><path d="M148 148l4.5 5L162.5 142" fill="none" stroke="#a8a8a8" stroke-width="1.1"/><path d="M1332.5 143L1337.6 147.7L1342.7 143" fill="none" stroke="#3b3b3b" stroke-width="1.2"/><path d="M193 144.8L197.0 148.8L201 144.8" fill="none" stroke="#777" stroke-width="1.1"/></svg>
<div style="left:0px;top:167px;width:1333px;height:19.5px;background:#f0f0f0"></div>
<svg style="position:absolute;left:0px;top:170px;" width="14" height="14" viewBox="0 0 14 14"><path d="M11 2v11H0z" fill="#dadada"/></svg>
<div style="left:680px;top:167px;width:64px;height:19.5px;background:#d6d6d6"></div>
<div style="left:680px;top:184.5px;width:64px;height:2px;background:#107c41"></div>
<div class="t" style="left:30.83px;top:171.41px;font-size:12.5px;line-height:12.5px;font-family:'Liberation Sans',sans-serif;font-weight:normal;font-style:normal;color:#444;">A</div>
<div class="t" style="left:144.24px;top:171.41px;font-size:12.5px;line-height:12.5px;font-family:'Liberation Sans',sans-serif;font-weight:normal;font-style:normal;color:#444;">C</div>
<div class="t" style="left:282.99px;top:171.41px;font-size:12.5px;line-height:12.5px;font-family:'Liberation Sans',sans-serif;font-weight:normal;font-style:normal;color:#444;">D</div>
<div class="t" style="left:363.33px;top:171.41px;font-size:12.5px;line-height:12.5px;font-family:'Liberation Sans',sans-serif;font-weight:normal;font-style:normal;color:#444;">E</div>
<div class="t" style="left:447.68px;top:171.41px;font-size:12.5px;line-height:12.5px;font-family:'Liberation Sans',sans-serif;font-weight:normal;font-style:normal;color:#444;">F</div>
<div class="t" style="left:537.14px;top:171.41px;font-size:12.5px;line-height:12.5px;font-family:'Liberation Sans',sans-serif;font-weight:normal;font-style:normal;color:#444;">G</div>
<div class="t" style="left:626.49px;top:171.41px;font-size:12.5px;line-height:12.5px;font-family:'Liberation Sans',sans-serif;font-weight:normal;font-style:normal;color:#444;">H</div>
<div class="t" style="left:709.62px;top:171.41px;font-size:12.5px;line-height:12.5px;font-family:'Liberation Sans',sans-serif;font-weight:normal;font-style:normal;color:#107c41;">J</div>
<div class="t" style="left:773.33px;top:171.41px;font-size:12.5px;line-height:12.5px;font-family:'Liberation Sans',sans-serif;font-weight:normal;font-style:normal;color:#444;">K</div>
<div class="t" style="left:857.77px;top:171.41px;font-size:12.5px;line-height:12.5px;font-family:'Liberation Sans',sans-serif;font-weight:normal;font-style:normal;color:#444;">L</div>
<div class="t" style="left:939.79px;top:171.41px;font-size:12.5px;line-height:12.5px;font-family:'Liberation Sans',sans-serif;font-weight:normal;font-style:normal;color:#444;">M</div>
<div class="t" style="left:1005.49px;top:171.41px;font-size:12.5px;line-height:12.5px;font-family:'Liberation Sans',sans-serif;font-weight:normal;font-style:normal;color:#444;">N</div>
<div class="t" style="left:1086.14px;top:171.41px;font-size:12.5px;line-height:12.5px;font-family:'Liberation Sans',sans-serif;font-weight:normal;font-style:normal;color:#444;">O</div>
<div class="t" style="left:1180.83px;top:171.41px;font-size:12.5px;line-height:12.5px;font-family:'Liberation Sans',sans-serif;font-weight:normal;font-style:normal;color:#444;">P</div>
<div class="t" style="left:1276.64px;top:171.41px;font-size:12.5px;line-height:12.5px;font-family:'Liberation Sans',sans-serif;font-weight:normal;font-style:normal;color:#444;">Q</div>
<div style="left:14px;top:168px;width:1px;height:18.5px;background:#d4d4d4"></div>
<div style="left:54px;top:168px;width:1px;height:18.5px;background:#d4d4d4"></div>
<div style="left:58px;top:168px;width:1px;height:18.5px;background:#d4d4d4"></div>
<div style="left:241px;top:168px;width:1px;height:18.5px;background:#d4d4d4"></div>
<div style="left:333px;top:168px;width:1px;height:18.5px;background:#d4d4d4"></div>
<div style="left:401px;top:168px;width:1px;height:18.5px;background:#d4d4d4"></div>
<div style="left:501px;top:168px;width:1px;height:18.5px;background:#d4d4d4"></div>
<div style="left:582px;top:168px;width:1px;height:18.5px;background:#d4d4d4"></div>
<div style="left:679px;top:168px;width:1px;height:18.5px;background:#d4d4d4"></div>
<div style="left:681px;top:168px;width:1px;height:18.5px;background:#d4d4d4"></div>
<div style="left:744px;top:168px;width:1px;height:18.5px;background:#d4d4d4"></div>
<div style="left:809px;top:168px;width:1px;height:18.5px;background:#d4d4d4"></div>
<div style="left:912px;top:168px;width:1px;height:18.5px;background:#d4d4d4"></div>
<div style="left:977px;top:168px;width:1px;height:18.5px;background:#d4d4d4"></div>
<div style="left:1042px;top:168px;width:1px;height:18.5px;background:#d4d4d4"></div>
<div style="left:1139px;top:168px;width:1px;height:18.5px;background:#d4d4d4"></div>
<div style="left:1230px;top:168px;width:1px;height:18.5px;background:#d4d4d4"></div>
<div style="left:1332px;top:168px;width:1px;height:18.5px;background:#d4d4d4"></div>
<div style="left:56px;top:167px;width:1px;height:19.5px;background:#a8a8a8"></div>
<div style="left:0px;top:186px;width:1333px;height:1px;background:#a0a0a0"></div>
<div style="left:0px;top:187px;width:14px;height:474px;background:#f0f0f0"></div>
<div style="left:0px;top:284px;width:14px;height:20px;background:#dedede"></div>
<div style="left:0px;top:210px;width:14px;height:1px;background:#d8d8d8"></div>
<div class="t" style="left:-1.28px;top:195.41px;font-size:12.5px;line-height:12.5px;font-family:'Liberation Sans',sans-serif;font-weight:normal;font-style:normal;color:#444;">5</div>
<div style="left:0px;top:226px;width:14px;height:1px;background:#d8d8d8"></div>
<div class="t" style="left:-1.28px;top:213.21px;font-size:12.5px;line-height:12.5px;font-family:'Liberation Sans',sans-serif;font-weight:normal;font-style:normal;color:#444;">6</div>
<div style="left:0px;top:245px;width:14px;height:1px;background:#d8d8d8"></div>
<div class="t" style="left:-1.28px;top:230.11px;font-size:12.5px;line-height:12.5px;font-family:'Liberation Sans',sans-serif;font-weight:normal;font-style:normal;color:#444;">8</div>
<div style="left:0px;top:264.3px;width:14px;height:1px;background:#d8d8d8"></div>
<div class="t" style="left:-1.28px;top:249.21px;font-size:12.5px;line-height:12.5px;font-family:'Liberation Sans',sans-serif;font-weight:normal;font-style:normal;color:#444;">9</div>
<div style="left:0px;top:284px;width:14px;height:1px;background:#d8d8d8"></div>
<div class="t" style="left:-4.75px;top:269.11px;font-size:12.5px;line-height:12.5px;font-family:'Liberation Sans',sans-serif;font-weight:normal;font-style:normal;color:#444;">10</div>
<div style="left:0px;top:304px;width:14px;height:1px;background:#d8d8d8"></div>
<div class="t" style="left:-4.29px;top:289.81px;font-size:12.5px;line-height:12.5px;font-family:'Liberation Sans',sans-serif;font-weight:normal;font-style:normal;color:#107c41;">11</div>
<div style="left:0px;top:324px;width:14px;height:1px;background:#d8d8d8"></div>
<div class="t" style="left:-4.75px;top:309.81px;font-size:12.5px;line-height:12.5px;font-family:'Liberation Sans',sans-serif;font-weight:normal;font-style:normal;color:#444;">12</div>
<div style="left:0px;top:344px;width:14px;height:1px;background:#d8d8d8"></div>
<div class="t" style="left:-4.75px;top:329.81px;font-size:12.5px;line-height:12.5px;font-family:'Liberation Sans',sans-serif;font-weight:normal;font-style:normal;color:#444;">13</div>
<div style="left:0px;top:364px;width:14px;height:1px;background:#d8d8d8"></div>
<div class="t" style="left:-4.75px;top:349.81px;font-size:12.5px;line-height:12.5px;font-family:'Liberation Sans',sans-serif;font-weight:normal;font-style:normal;color:#444;">14</div>
<div style="left:0px;top:384px;width:14px;height:1px;background:#d8d8d8"></div>
<div class="t" style="left:-4.75px;top:369.81px;font-size:12.5px;line-height:12.5px;font-family:'Liberation Sans',sans-serif;font-weight:normal;font-style:normal;color:#444;">15</div>
<div style="left:0px;top:404px;width:14px;height:1px;background:#d8d8d8"></div>
<div class="t" style="left:-4.75px;top:389.81px;font-size:12.5px;line-height:12.5px;font-family:'Liberation Sans',sans-serif;font-weight:normal;font-style:normal;color:#444;">16</div>
<div style="left:0px;top:424px;width:14px;height:1px;background:#d8d8d8"></div>
<div class="t" style="left:-4.75px;top:409.81px;font-size:12.5px;line-height:12.5px;font-family:'Liberation Sans',sans-serif;font-weight:normal;font-style:normal;color:#444;">17</div>
<div style="left:0px;top:444px;width:14px;height:1px;background:#d8d8d8"></div>
<div class="t" style="left:-4.75px;top:429.81px;font-size:12.5px;line-height:12.5px;font-family:'Liberation Sans',sans-serif;font-weight:normal;font-style:normal;color:#444;">18</div>
<div style="left:0px;top:464px;width:14px;height:1px;background:#d8d8d8"></div>
<div class="t" style="left:-4.75px;top:449.81px;font-size:12.5px;line-height:12.5px;font-family:'Liberation Sans',sans-serif;font-weight:normal;font-style:normal;color:#444;">19</div>
<div style="left:0px;top:484px;width:14px;height:1px;background:#d8d8d8"></div>
<div class="t" style="left:-4.75px;top:469.81px;font-size:12.5px;line-height:12.5px;font-family:'Liberation Sans',sans-serif;font-weight:normal;font-style:normal;color:#444;">20</div>
<div style="left:0px;top:504px;width:14px;height:1px;background:#d8d8d8"></div>
<div class="t" style="left:-4.75px;top:489.81px;font-size:12.5px;line-height:12.5px;font-family:'Liberation Sans',sans-serif;font-weight:normal;font-style:normal;color:#444;">21</div>
<div style="left:0px;top:524px;width:14px;height:1px;background:#d8d8d8"></div>
<div class="t" style="left:-4.75px;top:509.81px;font-size:12.5px;line-height:12.5px;font-family:'Liberation Sans',sans-serif;font-weight:normal;font-style:normal;color:#444;">22</div>
<div style="left:0px;top:544px;width:14px;height:1px;background:#d8d8d8"></div>
<div class="t" style="left:-4.75px;top:529.81px;font-size:12.5px;line-height:12.5px;font-family:'Liberation Sans',sans-serif;font-weight:normal;font-style:normal;color:#444;">23</div>
<div style="left:0px;top:564px;width:14px;height:1px;background:#d8d8d8"></div>
<div class="t" style="left:-4.75px;top:549.81px;font-size:12.5px;line-height:12.5px;font-family:'Liberation Sans',sans-serif;font-weight:normal;font-style:normal;color:#444;">24</div>
<div style="left:0px;top:584px;width:14px;height:1px;background:#d8d8d8"></div>
<div class="t" style="left:-4.75px;top:569.81px;font-size:12.5px;line-height:12.5px;font-family:'Liberation Sans',sans-serif;font-weight:normal;font-style:normal;color:#444;">25</div>
<div style="left:0px;top:604px;width:14px;height:1px;background:#d8d8d8"></div>
<div class="t" style="left:-4.75px;top:589.81px;font-size:12.5px;line-height:12.5px;font-family:'Liberation Sans',sans-serif;font-weight:normal;font-style:normal;color:#444;">26</div>
<div style="left:0px;top:624px;width:14px;height:1px;background:#d8d8d8"></div>
<div class="t" style="left:-4.75px;top:609.81px;font-size:12.5px;line-height:12.5px;font-family:'Liberation Sans',sans-serif;font-weight:normal;font-style:normal;color:#444;">27</div>
<div style="left:0px;top:644px;width:14px;height:1px;background:#d8d8d8"></div>
<div class="t" style="left:-4.75px;top:629.81px;font-size:12.5px;line-height:12.5px;font-family:'Liberation Sans',sans-serif;font-weight:normal;font-style:normal;color:#444;">28</div>
<div style="left:0px;top:664px;width:14px;height:1px;background:#d8d8d8"></div>
<div class="t" style="left:-4.75px;top:649.81px;font-size:12.5px;line-height:12.5px;font-family:'Liberation Sans',sans-serif;font-weight:normal;font-style:normal;color:#444;">29</div>
<div style="left:0px;top:225px;width:14px;height:1px;background:#d0d0d0"></div>
<div style="left:0px;top:229px;width:14px;height:1px;background:#d0d0d0"></div>
<div style="left:14px;top:167px;width:1px;height:494px;background:#a6a6a6"></div>
<div style="left:13px;top:284.5px;width:2px;height:19.5px;background:#217346"></div>
<div style="left:15px;top:187px;width:1318px;height:474px;background:#fff"></div>
<div style="left:15px;top:245px;width:1317px;height:39px;background:#ebefdd"></div>
<div style="left:56px;top:187px;width:1px;height:474px;background:#a8a8a8"></div>
<div style="left:15px;top:284px;width:1318px;height:1px;background:#a0a0a0"></div>
<div style="left:14px;top:244px;width:1318px;height:1px;background:#000"></div>
<div style="left:241px;top:244px;width:1px;height:40px;background:#000"></div>
<div style="left:333px;top:244px;width:1px;height:40px;background:#000"></div>
<div style="left:401px;top:244px;width:1px;height:40px;background:#000"></div>
<div style="left:501px;top:244px;width:1px;height:40px;background:#000"></div>
<div style="left:582px;top:244px;width:1px;height:40px;background:#000"></div>
<div style="left:679px;top:244px;width:1px;height:40px;background:#000"></div>
<div style="left:744px;top:244px;width:1px;height:40px;background:#000"></div>
<div style="left:809px;top:244px;width:1px;height:40px;background:#000"></div>
<div style="left:912px;top:244px;width:1px;height:40px;background:#000"></div>
<div style="left:1042px;top:244px;width:1px;height:40px;background:#000"></div>
<div style="left:1139px;top:244px;width:1px;height:40px;background:#000"></div>
<div style="left:1230px;top:244px;width:1px;height:40px;background:#000"></div>
<div style="left:1331px;top:244px;width:1px;height:40px;background:#000"></div>
<div style="left:977px;top:264px;width:1px;height:20px;background:#000"></div>
<div style="left:912px;top:264px;width:130px;height:1px;background:#000"></div>
<div style="left:241px;top:285px;width:1px;height:376px;background:#000"></div>
<div style="left:333px;top:285px;width:1px;height:376px;background:#000"></div>
<div style="left:401px;top:285px;width:1px;height:376px;background:#000"></div>
<div style="left:501px;top:285px;width:1px;height:376px;background:#000"></div>
<div style="left:582px;top:285px;width:1px;height:376px;background:#000"></div>
<div style="left:679px;top:285px;width:1px;height:376px;background:#000"></div>
<div style="left:744px;top:285px;width:1px;height:376px;background:#000"></div>
<div style="left:809px;top:285px;width:1px;height:376px;background:#000"></div>
<div style="left:912px;top:285px;width:1px;height:376px;background:#000"></div>
<div style="left:977px;top:285px;width:1px;height:376px;background:#000"></div>
<div style="left:1042px;top:285px;width:1px;height:376px;background:#000"></div>
<div style="left:1139px;top:285px;width:1px;height:376px;background:#000"></div>
<div style="left:1230px;top:285px;width:1px;height:376px;background:#000"></div>
<div style="left:1331px;top:285px;width:1px;height:376px;background:#000"></div>
<div style="left:241px;top:304px;width:1091px;height:1px;background:#000"></div>
<div style="left:241px;top:324px;width:1091px;height:1px;background:#000"></div>
<div style="left:241px;top:344px;width:1091px;height:1px;background:#000"></div>
<div style="left:241px;top:364px;width:1091px;height:1px;background:#000"></div>
<div style="left:241px;top:384px;width:1091px;height:1px;background:#000"></div>
<div style="left:241px;top:404px;width:1091px;height:1px;background:#000"></div>
<div style="left:241px;top:424px;width:1091px;height:1px;background:#000"></div>
<div style="left:241px;top:444px;width:1091px;height:1px;background:#000"></div>
<div style="left:241px;top:464px;width:1091px;height:1px;background:#000"></div>
<div style="left:241px;top:484px;width:1091px;height:1px;background:#000"></div>
<div style="left:241px;top:504px;width:1091px;height:1px;background:#000"></div>
<div style="left:241px;top:524px;width:1091px;height:1px;background:#000"></div>
<div style="left:241px;top:544px;width:1091px;height:1px;background:#000"></div>
<div style="left:241px;top:564px;width:1091px;height:1px;background:#000"></div>
<div style="left:241px;top:584px;width:1091px;height:1px;background:#000"></div>
<div style="left:241px;top:604px;width:1091px;height:1px;background:#000"></div>
<div style="left:241px;top:624px;width:1091px;height:1px;background:#000"></div>
<div style="left:241px;top:644px;width:1091px;height:1px;background:#000"></div>
<div class="t" style="left:458.70px;top:190.11px;font-size:19px;line-height:19px;font-family:'Liberation Sans',sans-serif;font-weight:bold;font-style:normal;color:#000;">RETIREMENT ACRRUALS FOR THE YEAR 2025</div>
<div class="t" style="left:388.40px;top:211.77px;font-size:14.2px;line-height:14.2px;font-family:'Liberation Sans',sans-serif;font-weight:normal;font-style:italic;color:#000;">Computation Based On Retirement Policy No. 001, Series Of 2019 And Current Basic Rate</div>
<div class="t" style="left:20.30px;top:248.49px;font-size:13px;line-height:13px;font-family:'Liberation Sans',sans-serif;font-weight:bold;font-style:normal;color:#000;">SEQ</div>
<div class="t" style="left:23.80px;top:265.89px;font-size:13px;line-height:13px;font-family:'Liberation Sans',sans-serif;font-weight:bold;font-style:normal;color:#000;transform:scaleX(1.0298);transform-origin:0 0;">NO.</div>
<div class="t" style="left:132.30px;top:256.99px;font-size:13px;line-height:13px;font-family:'Liberation Sans',sans-serif;font-weight:bold;font-style:normal;color:#000;transform:scaleX(0.8334);transform-origin:0 0;">NAME</div>
<div class="t" style="left:251.80px;top:256.99px;font-size:13px;line-height:13px;font-family:'Liberation Sans',sans-serif;font-weight:bold;font-style:normal;color:#000;transform:scaleX(0.9231);transform-origin:0 0;">Date of Birth</div>
<div class="t" style="left:355.50px;top:256.99px;font-size:13px;line-height:13px;font-family:'Liberation Sans',sans-serif;font-weight:bold;font-style:normal;color:#000;transform:scaleX(0.8958);transform-origin:0 0;">Age</div>
<div class="t" style="left:435.30px;top:249.29px;font-size:13px;line-height:13px;font-family:'Liberation Sans',sans-serif;font-weight:bold;font-style:normal;color:#000;transform:scaleX(0.9080);transform-origin:0 0;">Basic</div>
<div class="t" style="left:438.60px;top:264.99px;font-size:13px;line-height:13px;font-family:'Liberation Sans',sans-serif;font-weight:bold;font-style:normal;color:#000;transform:scaleX(0.8943);transform-origin:0 0;">Rate</div>
<div class="t" style="left:529.60px;top:249.29px;font-size:13px;line-height:13px;font-family:'Liberation Sans',sans-serif;font-weight:bold;font-style:normal;color:#000;transform:scaleX(0.8872);transform-origin:0 0;">Date</div>
<div class="t" style="left:527.40px;top:264.99px;font-size:13px;line-height:13px;font-family:'Liberation Sans',sans-serif;font-weight:bold;font-style:normal;color:#000;transform:scaleX(0.8727);transform-origin:0 0;">Hired</div>
<div class="t" style="left:600.30px;top:249.29px;font-size:13px;line-height:13px;font-family:'Liberation Sans',sans-serif;font-weight:bold;font-style:normal;color:#000;transform:scaleX(1.0269);transform-origin:0 0;">Permanent</div>
<div class="t" style="left:594.90px;top:264.99px;font-size:13px;line-height:13px;font-family:'Liberation Sans',sans-serif;font-weight:bold;font-style:normal;color:#000;transform:scaleX(0.9033);transform-origin:0 0;">Appointment</div>
<div class="t" style="left:702.80px;top:256.99px;font-size:13px;line-height:13px;font-family:'Liberation Sans',sans-serif;font-weight:bold;font-style:normal;color:#000;transform:scaleX(0.8801);transform-origin:0 0;">L/S</div>
<div class="t" style="left:760.00px;top:256.99px;font-size:13px;line-height:13px;font-family:'Liberation Sans',sans-serif;font-weight:bold;font-style:normal;color:#000;transform:scaleX(0.9382);transform-origin:0 0;">MULT.</div>
<div class="t" style="left:820.00px;top:256.99px;font-size:13px;line-height:13px;font-family:'Liberation Sans',sans-serif;font-weight:bold;font-style:normal;color:#000;transform:scaleX(0.8834);transform-origin:0 0;">RET GRATUITY</div>
<div class="t" style="left:922.40px;top:247.17px;font-size:13.5px;line-height:13.5px;font-family:'Liberation Sans',sans-serif;font-weight:bold;font-style:normal;color:#000;transform:scaleX(1.0273);transform-origin:0 0;">UN-USED LEAV</div>
<div class="t" style="left:936.90px;top:267.59px;font-size:13px;line-height:13px;font-family:'Liberation Sans',sans-serif;font-weight:bold;font-style:normal;color:#000;transform:scaleX(0.8728);transform-origin:0 0;">VL</div>
<div class="t" style="left:1003.40px;top:267.59px;font-size:13px;line-height:13px;font-family:'Liberation Sans',sans-serif;font-weight:bold;font-style:normal;color:#000;transform:scaleX(0.8006);transform-origin:0 0;">SL</div>
<div class="t" style="left:1070.70px;top:257.27px;font-size:13.5px;line-height:13.5px;font-family:'Liberation Sans',sans-serif;font-weight:bold;font-style:normal;color:#000;transform:scaleX(0.9533);transform-origin:0 0;">TOTAL</div>
<div class="t" style="left:1145.50px;top:248.69px;font-size:13px;line-height:13px;font-family:'Liberation Sans',sans-serif;font-weight:bold;font-style:normal;color:#000;transform:scaleX(0.9486);transform-origin:0 0;">Monetized la</div>
<div class="t" style="left:1157.60px;top:264.59px;font-size:13px;line-height:13px;font-family:'Liberation Sans',sans-serif;font-weight:bold;font-style:normal;color:#000;transform:scaleX(0.9118);transform-origin:0 0;">Dec. 2010</div>
<div class="t" style="left:1236.60px;top:256.79px;font-size:13px;line-height:13px;font-family:'Liberation Sans',sans-serif;font-weight:bold;font-style:normal;color:#000;transform:scaleX(0.8866);transform-origin:0 0;">ESTIMATED NET</div>
<div style="left:39px;top:246px;width:17px;height:17px;background:linear-gradient(#fdfdfe,#edf0f5);border:1px solid #a9b0bb;box-sizing:border-box"></div>
<svg style="position:absolute;left:43.5px;top:253px;" width="8" height="4.5" viewBox="0 0 8 4.5"><path d="M0.5 0h7L4 4z" fill="#5a5a5a"/></svg>
<div style="left:224px;top:246px;width:17px;height:17px;background:linear-gradient(#fdfdfe,#edf0f5);border:1px solid #a9b0bb;box-sizing:border-box"></div>
<svg style="position:absolute;left:228.5px;top:253px;" width="8" height="4.5" viewBox="0 0 8 4.5"><path d="M0.5 0h7L4 4z" fill="#5a5a5a"/></svg>
<div style="left:316px;top:246px;width:17px;height:17px;background:linear-gradient(#fdfdfe,#edf0f5);border:1px solid #a9b0bb;box-sizing:border-box"></div>
<svg style="position:absolute;left:320.5px;top:253px;" width="8" height="4.5" viewBox="0 0 8 4.5"><path d="M0.5 0h7L4 4z" fill="#5a5a5a"/></svg>
<div style="left:384px;top:246px;width:17px;height:17px;background:linear-gradient(#fdfdfe,#edf0f5);border:1px solid #a9b0bb;box-sizing:border-box"></div>
<svg style="position:absolute;left:388.5px;top:253px;" width="8" height="4.5" viewBox="0 0 8 4.5"><path d="M0.5 0h7L4 4z" fill="#5a5a5a"/></svg>
<div style="left:484px;top:246px;width:17px;height:17px;background:linear-gradient(#fdfdfe,#edf0f5);border:1px solid #a9b0bb;box-sizing:border-box"></div>
<svg style="position:absolute;left:488.5px;top:253px;" width="8" height="4.5" viewBox="0 0 8 4.5"><path d="M0.5 0h7L4 4z" fill="#5a5a5a"/></svg>
<div style="left:565px;top:246px;width:17px;height:17px;background:linear-gradient(#fdfdfe,#edf0f5);border:1px solid #a9b0bb;box-sizing:border-box"></div>
<svg style="position:absolute;left:569.5px;top:253px;" width="8" height="4.5" viewBox="0 0 8 4.5"><path d="M0.5 0h7L4 4z" fill="#5a5a5a"/></svg>
<div style="left:662px;top:246px;width:17px;height:17px;background:linear-gradient(#fdfdfe,#edf0f5);border:1px solid #a9b0bb;box-sizing:border-box"></div>
<svg style="position:absolute;left:666.5px;top:253px;" width="8" height="4.5" viewBox="0 0 8 4.5"><path d="M0.5 0h7L4 4z" fill="#5a5a5a"/></svg>
<div style="left:727px;top:246px;width:17px;height:17px;background:linear-gradient(#fdfdfe,#edf0f5);border:1px solid #a9b0bb;box-sizing:border-box"></div>
<svg style="position:absolute;left:731.5px;top:253px;" width="8" height="4.5" viewBox="0 0 8 4.5"><path d="M0.5 0h7L4 4z" fill="#5a5a5a"/></svg>
<div style="left:792px;top:246px;width:17px;height:17px;background:linear-gradient(#fdfdfe,#edf0f5);border:1px solid #a9b0bb;box-sizing:border-box"></div>
<svg style="position:absolute;left:796.5px;top:253px;" width="8" height="4.5" viewBox="0 0 8 4.5"><path d="M0.5 0h7L4 4z" fill="#5a5a5a"/></svg>
<div style="left:895px;top:246px;width:17px;height:17px;background:linear-gradient(#fdfdfe,#edf0f5);border:1px solid #a9b0bb;box-sizing:border-box"></div>
<svg style="position:absolute;left:899.5px;top:253px;" width="8" height="4.5" viewBox="0 0 8 4.5"><path d="M0.5 0h7L4 4z" fill="#5a5a5a"/></svg>
<div style="left:1025px;top:246px;width:17px;height:17px;background:linear-gradient(#fdfdfe,#edf0f5);border:1px solid #a9b0bb;box-sizing:border-box"></div>
<svg style="position:absolute;left:1029.5px;top:253px;" width="8" height="4.5" viewBox="0 0 8 4.5"><path d="M0.5 0h7L4 4z" fill="#5a5a5a"/></svg>
<div style="left:1122px;top:246px;width:17px;height:17px;background:linear-gradient(#fdfdfe,#edf0f5);border:1px solid #a9b0bb;box-sizing:border-box"></div>
<svg style="position:absolute;left:1126.5px;top:253px;" width="8" height="4.5" viewBox="0 0 8 4.5"><path d="M0.5 0h7L4 4z" fill="#5a5a5a"/></svg>
<div style="left:1213px;top:246px;width:17px;height:17px;background:linear-gradient(#fdfdfe,#edf0f5);border:1px solid #a9b0bb;box-sizing:border-box"></div>
<svg style="position:absolute;left:1217.5px;top:253px;" width="8" height="4.5" viewBox="0 0 8 4.5"><path d="M0.5 0h7L4 4z" fill="#5a5a5a"/></svg>
<div style="left:1314px;top:246px;width:17px;height:17px;background:linear-gradient(#fdfdfe,#edf0f5);border:1px solid #a9b0bb;box-sizing:border-box"></div>
<svg style="position:absolute;left:1318.5px;top:253px;" width="8" height="4.5" viewBox="0 0 8 4.5"><path d="M0.5 0h7L4 4z" fill="#5a5a5a"/></svg>
<div class="t" style="left:31.85px;top:287.97px;font-size:14.2px;line-height:14.2px;font-family:'Liberation Sans',sans-serif;font-weight:normal;font-style:normal;color:#000;">1</div>
<div class="t" style="left:58.90px;top:287.97px;font-size:14.2px;line-height:14.2px;font-family:'Liberation Sans',sans-serif;font-weight:normal;font-style:normal;color:#000;">AE</div>
<div class="t" style="left:93.52px;top:287.97px;font-size:14.2px;line-height:14.2px;font-family:'Liberation Sans',sans-serif;font-weight:normal;font-style:normal;color:#000;">_, A</div>
<div class="t" style="left:137.60px;top:287.97px;font-size:14.2px;line-height:14.2px;font-family:'Liberation Sans',sans-serif;font-weight:normal;font-style:normal;color:#000;">sid S</div>
<div class="t" style="left:259.50px;top:287.97px;font-size:14.2px;line-height:14.2px;font-family:'Liberation Sans',sans-serif;font-weight:normal;font-style:normal;color:#000;">01/1</div>
<div class="t" style="left:286.76px;top:287.97px;font-size:14.2px;line-height:14.2px;font-family:'Liberation Sans',sans-serif;font-weight:normal;font-style:normal;color:#000;">5/1</div>
<div class="t" style="left:359.60px;top:287.97px;font-size:14.2px;line-height:14.2px;font-family:'Liberation Sans',sans-serif;font-weight:normal;font-style:normal;color:#000;">45</div>
<div class="t" style="left:430.33px;top:287.97px;font-size:14.2px;line-height:14.2px;font-family:'Liberation Sans',sans-serif;font-weight:normal;font-style:normal;color:#000;">23,236.00</div>
<div class="t" style="left:508.26px;top:287.97px;font-size:14.2px;line-height:14.2px;font-family:'Liberation Sans',sans-serif;font-weight:normal;font-style:normal;color:#000;">10/29/2018</div>
<div class="t" style="left:605.93px;top:287.97px;font-size:14.2px;line-height:14.2px;font-family:'Liberation Sans',sans-serif;font-weight:normal;font-style:normal;color:#000;">01/01/2022</div>
<div class="t" style="left:709.32px;top:289.11px;font-size:12.5px;line-height:12.5px;font-family:'Liberation Sans',sans-serif;font-weight:normal;font-style:normal;color:#000;">4</div>
<div class="t" style="left:767.24px;top:287.97px;font-size:14.2px;line-height:14.2px;font-family:'Liberation Sans',sans-serif;font-weight:normal;font-style:normal;color:#000;">0%</div>
<div class="t" style="left:884.72px;top:288.10px;font-size:14.05px;line-height:14.05px;font-family:'Liberation Sans',sans-serif;font-weight:bold;font-style:normal;color:#000;">-</div>
<div class="t" style="left:931.18px;top:287.97px;font-size:14.2px;line-height:14.2px;font-family:'Liberation Sans',sans-serif;font-weight:normal;font-style:normal;color:#000;">22.8</div>
<div class="t" style="left:1000.13px;top:287.97px;font-size:14.2px;line-height:14.2px;font-family:'Liberation Sans',sans-serif;font-weight:normal;font-style:normal;color:#000;">4.8</div>
<div class="t" style="left:1068.49px;top:288.10px;font-size:14.05px;line-height:14.05px;font-family:'Liberation Sans',sans-serif;font-weight:bold;font-style:normal;color:#000;">10,158.50</div>
<div class="t" style="left:1202.27px;top:287.97px;font-size:14.2px;line-height:14.2px;font-family:'Liberation Sans',sans-serif;font-weight:normal;font-style:normal;color:#000;">-</div>
<div class="t" style="left:1260.59px;top:288.10px;font-size:14.05px;line-height:14.05px;font-family:'Liberation Sans',sans-serif;font-weight:bold;font-style:normal;color:#000;">10,158.50</div>
<div class="t" style="left:31.85px;top:307.97px;font-size:14.2px;line-height:14.2px;font-family:'Liberation Sans',sans-serif;font-weight:normal;font-style:normal;color:#000;">2</div>
<div class="t" style="left:58.90px;top:307.97px;font-size:14.2px;line-height:14.2px;font-family:'Liberation Sans',sans-serif;font-weight:normal;font-style:normal;color:#000;">AE</div>
<div class="t" style="left:92.73px;top:307.97px;font-size:14.2px;line-height:14.2px;font-family:'Liberation Sans',sans-serif;font-weight:normal;font-style:normal;color:#000;">LLA</div>
<div class="t" style="left:137.60px;top:307.97px;font-size:14.2px;line-height:14.2px;font-family:'Liberation Sans',sans-serif;font-weight:normal;font-style:normal;color:#000;">dua</div>
<div class="t" style="left:189.60px;top:307.97px;font-size:14.2px;line-height:14.2px;font-family:'Liberation Sans',sans-serif;font-weight:normal;font-style:normal;color:#000;">Z.</div>
<div class="t" style="left:259.50px;top:307.97px;font-size:14.2px;line-height:14.2px;font-family:'Liberation Sans',sans-serif;font-weight:normal;font-style:normal;color:#000;">01/1</div>
<div class="t" style="left:286.76px;top:307.97px;font-size:14.2px;line-height:14.2px;font-family:'Liberation Sans',sans-serif;font-weight:normal;font-style:normal;color:#000;">9/1</div>
<div class="t" style="left:359.60px;top:307.97px;font-size:14.2px;line-height:14.2px;font-family:'Liberation Sans',sans-serif;font-weight:normal;font-style:normal;color:#000;">55</div>
<div class="t" style="left:430.33px;top:307.97px;font-size:14.2px;line-height:14.2px;font-family:'Liberation Sans',sans-serif;font-weight:normal;font-style:normal;color:#000;">23,236.00</div>
<div class="t" style="left:508.26px;top:307.97px;font-size:14.2px;line-height:14.2px;font-family:'Liberation Sans',sans-serif;font-weight:normal;font-style:normal;color:#000;">10/29/2018</div>
<div class="t" style="left:605.93px;top:307.97px;font-size:14.2px;line-height:14.2px;font-family:'Liberation Sans',sans-serif;font-weight:normal;font-style:normal;color:#000;">01/01/2022</div>
<div class="t" style="left:709.32px;top:309.11px;font-size:12.5px;line-height:12.5px;font-family:'Liberation Sans',sans-serif;font-weight:normal;font-style:normal;color:#000;">4</div>
<div class="t" style="left:767.24px;top:307.97px;font-size:14.2px;line-height:14.2px;font-family:'Liberation Sans',sans-serif;font-weight:normal;font-style:normal;color:#000;">0%</div>
<div class="t" style="left:884.72px;top:308.10px;font-size:14.05px;line-height:14.05px;font-family:'Liberation Sans',sans-serif;font-weight:bold;font-style:normal;color:#000;">-</div>
<div class="t" style="left:931.18px;top:307.97px;font-size:14.2px;line-height:14.2px;font-family:'Liberation Sans',sans-serif;font-weight:normal;font-style:normal;color:#000;">30.0</div>
<div class="t" style="left:996.18px;top:307.97px;font-size:14.2px;line-height:14.2px;font-family:'Liberation Sans',sans-serif;font-weight:normal;font-style:normal;color:#000;">40.5</div>
<div class="t" style="left:1068.49px;top:308.10px;font-size:14.05px;line-height:14.05px;font-family:'Liberation Sans',sans-serif;font-weight:bold;font-style:normal;color:#000;">26,042.70</div>
<div class="t" style="left:1202.27px;top:307.97px;font-size:14.2px;line-height:14.2px;font-family:'Liberation Sans',sans-serif;font-weight:normal;font-style:normal;color:#000;">-</div>
<div class="t" style="left:1260.59px;top:308.10px;font-size:14.05px;line-height:14.05px;font-family:'Liberation Sans',sans-serif;font-weight:bold;font-style:normal;color:#000;">26,042.70</div>
<div class="t" style="left:31.85px;top:327.97px;font-size:14.2px;line-height:14.2px;font-family:'Liberation Sans',sans-serif;font-weight:normal;font-style:normal;color:#000;">3</div>
<div class="t" style="left:58.90px;top:327.97px;font-size:14.2px;line-height:14.2px;font-family:'Liberation Sans',sans-serif;font-weight:normal;font-style:normal;color:#000;">AC</div>
<div class="t" style="left:95.11px;top:327.97px;font-size:14.2px;line-height:14.2px;font-family:'Liberation Sans',sans-serif;font-weight:normal;font-style:normal;color:#000;">o, J</div>
<div class="t" style="left:137.60px;top:327.97px;font-size:14.2px;line-height:14.2px;font-family:'Liberation Sans',sans-serif;font-weight:normal;font-style:normal;color:#000;">e D.</div>
<div class="t" style="left:259.50px;top:327.97px;font-size:14.2px;line-height:14.2px;font-family:'Liberation Sans',sans-serif;font-weight:normal;font-style:normal;color:#000;">01/1</div>
<div class="t" style="left:286.76px;top:327.97px;font-size:14.2px;line-height:14.2px;font-family:'Liberation Sans',sans-serif;font-weight:normal;font-style:normal;color:#000;">8/1</div>
<div class="t" style="left:359.60px;top:327.97px;font-size:14.2px;line-height:14.2px;font-family:'Liberation Sans',sans-serif;font-weight:normal;font-style:normal;color:#000;">55</div>
<div class="t" style="left:430.33px;top:327.97px;font-size:14.2px;line-height:14.2px;font-family:'Liberation Sans',sans-serif;font-weight:normal;font-style:normal;color:#000;">23,773.00</div>
<div class="t" style="left:508.26px;top:327.97px;font-size:14.2px;line-height:14.2px;font-family:'Liberation Sans',sans-serif;font-weight:normal;font-style:normal;color:#000;">03/01/2019</div>
<div class="t" style="left:605.93px;top:327.97px;font-size:14.2px;line-height:14.2px;font-family:'Liberation Sans',sans-serif;font-weight:normal;font-style:normal;color:#000;">01/01/2022</div>
<div class="t" style="left:709.32px;top:329.11px;font-size:12.5px;line-height:12.5px;font-family:'Liberation Sans',sans-serif;font-weight:normal;font-style:normal;color:#000;">4</div>
<div class="t" style="left:767.24px;top:327.97px;font-size:14.2px;line-height:14.2px;font-family:'Liberation Sans',sans-serif;font-weight:normal;font-style:normal;color:#000;">0%</div>
<div class="t" style="left:884.72px;top:328.10px;font-size:14.05px;line-height:14.05px;font-family:'Liberation Sans',sans-serif;font-weight:bold;font-style:normal;color:#000;">-</div>
<div class="t" style="left:931.18px;top:327.97px;font-size:14.2px;line-height:14.2px;font-family:'Liberation Sans',sans-serif;font-weight:normal;font-style:normal;color:#000;">28.0</div>
<div class="t" style="left:996.18px;top:327.97px;font-size:14.2px;line-height:14.2px;font-family:'Liberation Sans',sans-serif;font-weight:normal;font-style:normal;color:#000;">42.0</div>
<div class="t" style="left:1068.49px;top:328.10px;font-size:14.05px;line-height:14.05px;font-family:'Liberation Sans',sans-serif;font-weight:bold;font-style:normal;color:#000;">22,491.00</div>
<div class="t" style="left:1202.27px;top:327.97px;font-size:14.2px;line-height:14.2px;font-family:'Liberation Sans',sans-serif;font-weight:normal;font-style:normal;color:#000;">-</div>
<div class="t" style="left:1260.59px;top:328.10px;font-size:14.05px;line-height:14.05px;font-family:'Liberation Sans',sans-serif;font-weight:bold;font-style:normal;color:#000;">22,491.00</div>
<div class="t" style="left:31.85px;top:347.97px;font-size:14.2px;line-height:14.2px;font-family:'Liberation Sans',sans-serif;font-weight:normal;font-style:normal;color:#000;">4</div>
<div class="t" style="left:58.90px;top:347.97px;font-size:14.2px;line-height:14.2px;font-family:'Liberation Sans',sans-serif;font-weight:normal;font-style:normal;color:#000;">AC</div>
<div class="t" style="left:95.65px;top:347.97px;font-size:14.2px;line-height:14.2px;font-family:'Liberation Sans',sans-serif;font-weight:normal;font-style:normal;color:#000;">WA</div>
<div class="t" style="left:137.60px;top:347.97px;font-size:14.2px;line-height:14.2px;font-family:'Liberation Sans',sans-serif;font-weight:normal;font-style:normal;color:#000;">., H</div>
<div class="t" style="left:189.60px;top:347.97px;font-size:14.2px;line-height:14.2px;font-family:'Liberation Sans',sans-serif;font-weight:normal;font-style:normal;color:#000;">an</div>
<div class="t" style="left:259.50px;top:347.97px;font-size:14.2px;line-height:14.2px;font-family:'Liberation Sans',sans-serif;font-weight:normal;font-style:normal;color:#000;">01/1</div>
<div class="t" style="left:286.76px;top:347.97px;font-size:14.2px;line-height:14.2px;font-family:'Liberation Sans',sans-serif;font-weight:normal;font-style:normal;color:#000;">7/1</div>
<div class="t" style="left:359.60px;top:347.97px;font-size:14.2px;line-height:14.2px;font-family:'Liberation Sans',sans-serif;font-weight:normal;font-style:normal;color:#000;">65</div>
<div class="t" style="left:430.33px;top:347.97px;font-size:14.2px;line-height:14.2px;font-family:'Liberation Sans',sans-serif;font-weight:normal;font-style:normal;color:#000;">23,975.00</div>
<div class="t" style="left:508.26px;top:347.97px;font-size:14.2px;line-height:14.2px;font-family:'Liberation Sans',sans-serif;font-weight:normal;font-style:normal;color:#000;">03/01/1989</div>
<div class="t" style="left:605.93px;top:347.97px;font-size:14.2px;line-height:14.2px;font-family:'Liberation Sans',sans-serif;font-weight:normal;font-style:normal;color:#000;">01/02/1990</div>
<div class="t" style="left:705.85px;top:349.11px;font-size:12.5px;line-height:12.5px;font-family:'Liberation Sans',sans-serif;font-weight:normal;font-style:normal;color:#000;">36</div>
<div class="t" style="left:759.34px;top:347.97px;font-size:14.2px;line-height:14.2px;font-family:'Liberation Sans',sans-serif;font-weight:normal;font-style:normal;color:#000;">225%</div>
<div class="t" style="left:821.46px;top:348.10px;font-size:14.05px;line-height:14.05px;font-family:'Liberation Sans',sans-serif;font-weight:bold;font-style:normal;color:#000;">2,346,793.91</div>
<div class="t" style="left:927.23px;top:347.97px;font-size:14.2px;line-height:14.2px;font-family:'Liberation Sans',sans-serif;font-weight:normal;font-style:normal;color:#000;">105.0</div>
<div class="t" style="left:992.23px;top:347.97px;font-size:14.2px;line-height:14.2px;font-family:'Liberation Sans',sans-serif;font-weight:normal;font-style:normal;color:#000;">181.0</div>
<div class="t" style="left:1060.68px;top:348.10px;font-size:14.05px;line-height:14.05px;font-family:'Liberation Sans',sans-serif;font-weight:bold;font-style:normal;color:#000;">272,443.60</div>
<div class="t" style="left:1151.53px;top:347.97px;font-size:14.2px;line-height:14.2px;font-family:'Liberation Sans',sans-serif;font-weight:normal;font-style:normal;color:#000;">676,264.27</div>
<div class="t" style="left:1241.06px;top:348.10px;font-size:14.05px;line-height:14.05px;font-family:'Liberation Sans',sans-serif;font-weight:bold;font-style:normal;color:#000;">1,942,973.24</div>
<div class="t" style="left:31.85px;top:367.97px;font-size:14.2px;line-height:14.2px;font-family:'Liberation Sans',sans-serif;font-weight:normal;font-style:normal;color:#000;">5</div>
<div class="t" style="left:58.90px;top:367.97px;font-size:14.2px;line-height:14.2px;font-family:'Liberation Sans',sans-serif;font-weight:normal;font-style:normal;color:#000;">AC</div>
<div class="t" style="left:95.92px;top:367.97px;font-size:14.2px;line-height:14.2px;font-family:'Liberation Sans',sans-serif;font-weight:normal;font-style:normal;color:#000;">MC</div>
<div class="t" style="left:137.60px;top:367.97px;font-size:14.2px;line-height:14.2px;font-family:'Liberation Sans',sans-serif;font-weight:normal;font-style:normal;color:#000;">lay-A</div>
<div class="t" style="left:189.60px;top:367.97px;font-size:14.2px;line-height:14.2px;font-family:'Liberation Sans',sans-serif;font-weight:normal;font-style:normal;color:#000;">.</div>
<div class="t" style="left:259.50px;top:367.97px;font-size:14.2px;line-height:14.2px;font-family:'Liberation Sans',sans-serif;font-weight:normal;font-style:normal;color:#000;">11/1</div>
<div class="t" style="left:286.76px;top:367.97px;font-size:14.2px;line-height:14.2px;font-family:'Liberation Sans',sans-serif;font-weight:normal;font-style:normal;color:#000;">9/1</div>
<div class="t" style="left:359.60px;top:367.97px;font-size:14.2px;line-height:14.2px;font-family:'Liberation Sans',sans-serif;font-weight:normal;font-style:normal;color:#000;">35</div>
<div class="t" style="left:430.33px;top:367.97px;font-size:14.2px;line-height:14.2px;font-family:'Liberation Sans',sans-serif;font-weight:normal;font-style:normal;color:#000;">23,236.00</div>
<div class="t" style="left:508.26px;top:367.97px;font-size:14.2px;line-height:14.2px;font-family:'Liberation Sans',sans-serif;font-weight:normal;font-style:normal;color:#000;">08/01/2014</div>
<div class="t" style="left:605.93px;top:367.97px;font-size:14.2px;line-height:14.2px;font-family:'Liberation Sans',sans-serif;font-weight:normal;font-style:normal;color:#000;">01/20/2015</div>
<div class="t" style="left:706.31px;top:369.11px;font-size:12.5px;line-height:12.5px;font-family:'Liberation Sans',sans-serif;font-weight:normal;font-style:normal;color:#000;">11</div>
<div class="t" style="left:759.34px;top:367.97px;font-size:14.2px;line-height:14.2px;font-family:'Liberation Sans',sans-serif;font-weight:normal;font-style:normal;color:#000;">100%</div>
<div class="t" style="left:833.18px;top:368.10px;font-size:14.05px;line-height:14.05px;font-family:'Liberation Sans',sans-serif;font-weight:bold;font-style:normal;color:#000;">123,002.99</div>
<div class="t" style="left:927.23px;top:367.97px;font-size:14.2px;line-height:14.2px;font-family:'Liberation Sans',sans-serif;font-weight:normal;font-style:normal;color:#000;">123.0</div>
<div class="t" style="left:992.23px;top:367.97px;font-size:14.2px;line-height:14.2px;font-family:'Liberation Sans',sans-serif;font-weight:normal;font-style:normal;color:#000;">129.0</div>
<div class="t" style="left:1068.49px;top:368.10px;font-size:14.05px;line-height:14.05px;font-family:'Liberation Sans',sans-serif;font-weight:bold;font-style:normal;color:#000;">93,088.80</div>
<div class="t" style="left:1202.27px;top:367.97px;font-size:14.2px;line-height:14.2px;font-family:'Liberation Sans',sans-serif;font-weight:normal;font-style:normal;color:#000;">-</div>
<div class="t" style="left:1252.78px;top:368.10px;font-size:14.05px;line-height:14.05px;font-family:'Liberation Sans',sans-serif;font-weight:bold;font-style:normal;color:#000;">216,091.79</div>
<div class="t" style="left:31.85px;top:387.97px;font-size:14.2px;line-height:14.2px;font-family:'Liberation Sans',sans-serif;font-weight:normal;font-style:normal;color:#000;">6</div>
<div class="t" style="left:58.90px;top:387.97px;font-size:14.2px;line-height:14.2px;font-family:'Liberation Sans',sans-serif;font-weight:normal;font-style:normal;color:#000;">AC</div>
<div class="t" style="left:95.13px;top:387.97px;font-size:14.2px;line-height:14.2px;font-family:'Liberation Sans',sans-serif;font-weight:normal;font-style:normal;color:#000;">TIN</div>
<div class="t" style="left:137.60px;top:387.97px;font-size:14.2px;line-height:14.2px;font-family:'Liberation Sans',sans-serif;font-weight:normal;font-style:normal;color:#000;">ffrey</div>
<div class="t" style="left:259.50px;top:387.97px;font-size:14.2px;line-height:14.2px;font-family:'Liberation Sans',sans-serif;font-weight:normal;font-style:normal;color:#000;">11/1</div>
<div class="t" style="left:286.76px;top:387.97px;font-size:14.2px;line-height:14.2px;font-family:'Liberation Sans',sans-serif;font-weight:normal;font-style:normal;color:#000;">9/1</div>
<div class="t" style="left:359.60px;top:387.97px;font-size:14.2px;line-height:14.2px;font-family:'Liberation Sans',sans-serif;font-weight:normal;font-style:normal;color:#000;">35</div>
<div class="t" style="left:430.33px;top:387.97px;font-size:14.2px;line-height:14.2px;font-family:'Liberation Sans',sans-serif;font-weight:normal;font-style:normal;color:#000;">23,048.00</div>
<div class="t" style="left:508.26px;top:387.97px;font-size:14.2px;line-height:14.2px;font-family:'Liberation Sans',sans-serif;font-weight:normal;font-style:normal;color:#000;">08/01/2016</div>
<div class="t" style="left:605.93px;top:387.97px;font-size:14.2px;line-height:14.2px;font-family:'Liberation Sans',sans-serif;font-weight:normal;font-style:normal;color:#000;">05/01/2018</div>
<div class="t" style="left:709.32px;top:389.11px;font-size:12.5px;line-height:12.5px;font-family:'Liberation Sans',sans-serif;font-weight:normal;font-style:normal;color:#000;">8</div>
<div class="t" style="left:767.24px;top:387.97px;font-size:14.2px;line-height:14.2px;font-family:'Liberation Sans',sans-serif;font-weight:normal;font-style:normal;color:#000;">0%</div>
<div class="t" style="left:884.72px;top:388.10px;font-size:14.05px;line-height:14.05px;font-family:'Liberation Sans',sans-serif;font-weight:bold;font-style:normal;color:#000;">-</div>
<div class="t" style="left:931.18px;top:387.97px;font-size:14.2px;line-height:14.2px;font-family:'Liberation Sans',sans-serif;font-weight:normal;font-style:normal;color:#000;">67.0</div>
<div class="t" style="left:996.18px;top:387.97px;font-size:14.2px;line-height:14.2px;font-family:'Liberation Sans',sans-serif;font-weight:normal;font-style:normal;color:#000;">51.0</div>
<div class="t" style="left:1068.49px;top:388.10px;font-size:14.05px;line-height:14.05px;font-family:'Liberation Sans',sans-serif;font-weight:bold;font-style:normal;color:#000;">46,739.80</div>
<div class="t" style="left:1202.27px;top:387.97px;font-size:14.2px;line-height:14.2px;font-family:'Liberation Sans',sans-serif;font-weight:normal;font-style:normal;color:#000;">-</div>
<div class="t" style="left:1260.59px;top:388.10px;font-size:14.05px;line-height:14.05px;font-family:'Liberation Sans',sans-serif;font-weight:bold;font-style:normal;color:#000;">46,739.80</div>
<div class="t" style="left:31.85px;top:407.97px;font-size:14.2px;line-height:14.2px;font-family:'Liberation Sans',sans-serif;font-weight:normal;font-style:normal;color:#000;">7</div>
<div class="t" style="left:58.90px;top:407.97px;font-size:14.2px;line-height:14.2px;font-family:'Liberation Sans',sans-serif;font-weight:normal;font-style:normal;color:#000;">AL</div>
<div class="t" style="left:96.70px;top:407.97px;font-size:14.2px;line-height:14.2px;font-family:'Liberation Sans',sans-serif;font-weight:normal;font-style:normal;color:#000;">ON</div>
<div class="t" style="left:137.60px;top:407.97px;font-size:14.2px;line-height:14.2px;font-family:'Liberation Sans',sans-serif;font-weight:normal;font-style:normal;color:#000;">my</div>
<div class="t" style="left:259.50px;top:407.97px;font-size:14.2px;line-height:14.2px;font-family:'Liberation Sans',sans-serif;font-weight:normal;font-style:normal;color:#000;">11/1</div>
<div class="t" style="left:286.76px;top:407.97px;font-size:14.2px;line-height:14.2px;font-family:'Liberation Sans',sans-serif;font-weight:normal;font-style:normal;color:#000;">3/1</div>
<div class="t" style="left:359.60px;top:407.97px;font-size:14.2px;line-height:14.2px;font-family:'Liberation Sans',sans-serif;font-weight:normal;font-style:normal;color:#000;">45</div>
<div class="t" style="left:430.33px;top:407.97px;font-size:14.2px;line-height:14.2px;font-family:'Liberation Sans',sans-serif;font-weight:normal;font-style:normal;color:#000;">23,236.00</div>
<div class="t" style="left:508.26px;top:407.97px;font-size:14.2px;line-height:14.2px;font-family:'Liberation Sans',sans-serif;font-weight:normal;font-style:normal;color:#000;">09/16/2020</div>
<div class="t" style="left:605.93px;top:407.97px;font-size:14.2px;line-height:14.2px;font-family:'Liberation Sans',sans-serif;font-weight:normal;font-style:normal;color:#000;">01/01/2022</div>
<div class="t" style="left:709.32px;top:409.11px;font-size:12.5px;line-height:12.5px;font-family:'Liberation Sans',sans-serif;font-weight:normal;font-style:normal;color:#000;">4</div>
<div class="t" style="left:767.24px;top:407.97px;font-size:14.2px;line-height:14.2px;font-family:'Liberation Sans',sans-serif;font-weight:normal;font-style:normal;color:#000;">0%</div>
<div class="t" style="left:884.72px;top:408.10px;font-size:14.05px;line-height:14.05px;font-family:'Liberation Sans',sans-serif;font-weight:bold;font-style:normal;color:#000;">-</div>
<div class="t" style="left:931.18px;top:407.97px;font-size:14.2px;line-height:14.2px;font-family:'Liberation Sans',sans-serif;font-weight:normal;font-style:normal;color:#000;">27.0</div>
<div class="t" style="left:996.18px;top:407.97px;font-size:14.2px;line-height:14.2px;font-family:'Liberation Sans',sans-serif;font-weight:normal;font-style:normal;color:#000;">13.5</div>
<div class="t" style="left:1068.49px;top:408.10px;font-size:14.05px;line-height:14.05px;font-family:'Liberation Sans',sans-serif;font-weight:bold;font-style:normal;color:#000;">14,960.70</div>
<div class="t" style="left:1202.27px;top:407.97px;font-size:14.2px;line-height:14.2px;font-family:'Liberation Sans',sans-serif;font-weight:normal;font-style:normal;color:#000;">-</div>
<div class="t" style="left:1260.59px;top:408.10px;font-size:14.05px;line-height:14.05px;font-family:'Liberation Sans',sans-serif;font-weight:bold;font-style:normal;color:#000;">14,960.70</div>
<div class="t" style="left:31.85px;top:427.97px;font-size:14.2px;line-height:14.2px;font-family:'Liberation Sans',sans-serif;font-weight:normal;font-style:normal;color:#000;">8</div>
<div class="t" style="left:58.90px;top:427.97px;font-size:14.2px;line-height:14.2px;font-family:'Liberation Sans',sans-serif;font-weight:normal;font-style:normal;color:#000;">AL</div>
<div class="t" style="left:94.33px;top:427.97px;font-size:14.2px;line-height:14.2px;font-family:'Liberation Sans',sans-serif;font-weight:normal;font-style:normal;color:#000;">AN,</div>
<div class="t" style="left:137.60px;top:427.97px;font-size:14.2px;line-height:14.2px;font-family:'Liberation Sans',sans-serif;font-weight:normal;font-style:normal;color:#000;">rry C</div>
<div class="t" style="left:259.50px;top:427.97px;font-size:14.2px;line-height:14.2px;font-family:'Liberation Sans',sans-serif;font-weight:normal;font-style:normal;color:#000;">11/1</div>
<div class="t" style="left:286.76px;top:427.97px;font-size:14.2px;line-height:14.2px;font-family:'Liberation Sans',sans-serif;font-weight:normal;font-style:normal;color:#000;">4/1</div>
<div class="t" style="left:359.60px;top:427.97px;font-size:14.2px;line-height:14.2px;font-family:'Liberation Sans',sans-serif;font-weight:normal;font-style:normal;color:#000;">55</div>
<div class="t" style="left:431.38px;top:427.97px;font-size:14.2px;line-height:14.2px;font-family:'Liberation Sans',sans-serif;font-weight:normal;font-style:normal;color:#000;">23,511.68</div>
<div class="t" style="left:508.26px;top:427.97px;font-size:14.2px;line-height:14.2px;font-family:'Liberation Sans',sans-serif;font-weight:normal;font-style:normal;color:#000;">02/01/2010</div>
<div class="t" style="left:606.98px;top:427.97px;font-size:14.2px;line-height:14.2px;font-family:'Liberation Sans',sans-serif;font-weight:normal;font-style:normal;color:#000;">01/01/2011</div>
<div class="t" style="left:705.85px;top:429.11px;font-size:12.5px;line-height:12.5px;font-family:'Liberation Sans',sans-serif;font-weight:normal;font-style:normal;color:#000;">15</div>
<div class="t" style="left:759.34px;top:427.97px;font-size:14.2px;line-height:14.2px;font-family:'Liberation Sans',sans-serif;font-weight:normal;font-style:normal;color:#000;">125%</div>
<div class="t" style="left:833.18px;top:428.10px;font-size:14.05px;line-height:14.05px;font-family:'Liberation Sans',sans-serif;font-weight:bold;font-style:normal;color:#000;">180,219.00</div>
<div class="t" style="left:927.23px;top:427.97px;font-size:14.2px;line-height:14.2px;font-family:'Liberation Sans',sans-serif;font-weight:normal;font-style:normal;color:#000;">166.5</div>
<div class="t" style="left:992.23px;top:427.97px;font-size:14.2px;line-height:14.2px;font-family:'Liberation Sans',sans-serif;font-weight:normal;font-style:normal;color:#000;">195.0</div>
<div class="t" style="left:1061.45px;top:428.10px;font-size:14.05px;line-height:14.05px;font-family:'Liberation Sans',sans-serif;font-weight:bold;font-style:normal;color:#000;">114,234.00</div>
<div class="t" style="left:1202.27px;top:427.97px;font-size:14.2px;line-height:14.2px;font-family:'Liberation Sans',sans-serif;font-weight:normal;font-style:normal;color:#000;">-</div>
<div class="t" style="left:1252.78px;top:428.10px;font-size:14.05px;line-height:14.05px;font-family:'Liberation Sans',sans-serif;font-weight:bold;font-style:normal;color:#000;">294,453.00</div>
<div class="t" style="left:31.85px;top:447.97px;font-size:14.2px;line-height:14.2px;font-family:'Liberation Sans',sans-serif;font-weight:normal;font-style:normal;color:#000;">9</div>
<div class="t" style="left:58.90px;top:447.97px;font-size:14.2px;line-height:14.2px;font-family:'Liberation Sans',sans-serif;font-weight:normal;font-style:normal;color:#000;">AL</div>
<div class="t" style="left:93.54px;top:447.97px;font-size:14.2px;line-height:14.2px;font-family:'Liberation Sans',sans-serif;font-weight:normal;font-style:normal;color:#000;">RIC</div>
<div class="t" style="left:137.60px;top:447.97px;font-size:14.2px;line-height:14.2px;font-family:'Liberation Sans',sans-serif;font-weight:normal;font-style:normal;color:#000;">Rotc</div>
<div class="t" style="left:189.60px;top:447.97px;font-size:14.2px;line-height:14.2px;font-family:'Liberation Sans',sans-serif;font-weight:normal;font-style:normal;color:#000;"> L.</div>
<div class="t" style="left:259.50px;top:447.97px;font-size:14.2px;line-height:14.2px;font-family:'Liberation Sans',sans-serif;font-weight:normal;font-style:normal;color:#000;">01/1</div>
<div class="t" style="left:286.76px;top:447.97px;font-size:14.2px;line-height:14.2px;font-family:'Liberation Sans',sans-serif;font-weight:normal;font-style:normal;color:#000;">8/1</div>
<div class="t" style="left:359.60px;top:447.97px;font-size:14.2px;line-height:14.2px;font-family:'Liberation Sans',sans-serif;font-weight:normal;font-style:normal;color:#000;">35</div>
<div class="t" style="left:430.33px;top:447.97px;font-size:14.2px;line-height:14.2px;font-family:'Liberation Sans',sans-serif;font-weight:normal;font-style:normal;color:#000;">23,236.00</div>
<div class="t" style="left:508.26px;top:447.97px;font-size:14.2px;line-height:14.2px;font-family:'Liberation Sans',sans-serif;font-weight:normal;font-style:normal;color:#000;">05/04/2009</div>
<div class="t" style="left:606.98px;top:447.97px;font-size:14.2px;line-height:14.2px;font-family:'Liberation Sans',sans-serif;font-weight:normal;font-style:normal;color:#000;">01/01/2011</div>
<div class="t" style="left:705.85px;top:449.11px;font-size:12.5px;line-height:12.5px;font-family:'Liberation Sans',sans-serif;font-weight:normal;font-style:normal;color:#000;">15</div>
<div class="t" style="left:759.34px;top:447.97px;font-size:14.2px;line-height:14.2px;font-family:'Liberation Sans',sans-serif;font-weight:normal;font-style:normal;color:#000;">125%</div>
<div class="t" style="left:833.18px;top:448.10px;font-size:14.05px;line-height:14.05px;font-family:'Liberation Sans',sans-serif;font-weight:bold;font-style:normal;color:#000;">210,675.00</div>
<div class="t" style="left:927.23px;top:447.97px;font-size:14.2px;line-height:14.2px;font-family:'Liberation Sans',sans-serif;font-weight:normal;font-style:normal;color:#000;">107.0</div>
<div class="t" style="left:992.23px;top:447.97px;font-size:14.2px;line-height:14.2px;font-family:'Liberation Sans',sans-serif;font-weight:normal;font-style:normal;color:#000;">105.0</div>
<div class="t" style="left:1068.49px;top:448.10px;font-size:14.05px;line-height:14.05px;font-family:'Liberation Sans',sans-serif;font-weight:bold;font-style:normal;color:#000;">78,312.80</div>
<div class="t" style="left:1202.27px;top:447.97px;font-size:14.2px;line-height:14.2px;font-family:'Liberation Sans',sans-serif;font-weight:normal;font-style:normal;color:#000;">-</div>
<div class="t" style="left:1252.78px;top:448.10px;font-size:14.05px;line-height:14.05px;font-family:'Liberation Sans',sans-serif;font-weight:bold;font-style:normal;color:#000;">288,987.80</div>
<div class="t" style="left:27.90px;top:467.97px;font-size:14.2px;line-height:14.2px;font-family:'Liberation Sans',sans-serif;font-weight:normal;font-style:normal;color:#000;">10</div>
<div class="t" style="left:58.90px;top:467.97px;font-size:14.2px;line-height:14.2px;font-family:'Liberation Sans',sans-serif;font-weight:normal;font-style:normal;color:#000;">AL</div>
<div class="t" style="left:93.54px;top:467.97px;font-size:14.2px;line-height:14.2px;font-family:'Liberation Sans',sans-serif;font-weight:normal;font-style:normal;color:#000;">RIC</div>
<div class="t" style="left:137.60px;top:467.97px;font-size:14.2px;line-height:14.2px;font-family:'Liberation Sans',sans-serif;font-weight:normal;font-style:normal;color:#000;">lero</div>
<div class="t" style="left:259.50px;top:467.97px;font-size:14.2px;line-height:14.2px;font-family:'Liberation Sans',sans-serif;font-weight:normal;font-style:normal;color:#000;">01/1</div>
<div class="t" style="left:286.76px;top:467.97px;font-size:14.2px;line-height:14.2px;font-family:'Liberation Sans',sans-serif;font-weight:normal;font-style:normal;color:#000;">2/1</div>
<div class="t" style="left:359.60px;top:467.97px;font-size:14.2px;line-height:14.2px;font-family:'Liberation Sans',sans-serif;font-weight:normal;font-style:normal;color:#000;">35</div>
<div class="t" style="left:430.33px;top:467.97px;font-size:14.2px;line-height:14.2px;font-family:'Liberation Sans',sans-serif;font-weight:normal;font-style:normal;color:#000;">23,236.00</div>
<div class="t" style="left:508.26px;top:467.97px;font-size:14.2px;line-height:14.2px;font-family:'Liberation Sans',sans-serif;font-weight:normal;font-style:normal;color:#000;">05/26/2023</div>
<div class="t" style="left:605.93px;top:467.97px;font-size:14.2px;line-height:14.2px;font-family:'Liberation Sans',sans-serif;font-weight:normal;font-style:normal;color:#000;">01/01/2025</div>
<div class="t" style="left:709.32px;top:469.11px;font-size:12.5px;line-height:12.5px;font-family:'Liberation Sans',sans-serif;font-weight:normal;font-style:normal;color:#000;">1</div>
<div class="t" style="left:767.24px;top:467.97px;font-size:14.2px;line-height:14.2px;font-family:'Liberation Sans',sans-serif;font-weight:normal;font-style:normal;color:#000;">0%</div>
<div class="t" style="left:884.72px;top:468.10px;font-size:14.05px;line-height:14.05px;font-family:'Liberation Sans',sans-serif;font-weight:bold;font-style:normal;color:#000;">-</div>
<div class="t" style="left:935.13px;top:467.97px;font-size:14.2px;line-height:14.2px;font-family:'Liberation Sans',sans-serif;font-weight:normal;font-style:normal;color:#000;">0.0</div>
<div class="t" style="left:1000.13px;top:467.97px;font-size:14.2px;line-height:14.2px;font-family:'Liberation Sans',sans-serif;font-weight:normal;font-style:normal;color:#000;">0.0</div>
<div class="t" style="left:1111.82px;top:468.10px;font-size:14.05px;line-height:14.05px;font-family:'Liberation Sans',sans-serif;font-weight:bold;font-style:normal;color:#000;">-</div>
<div class="t" style="left:1202.27px;top:467.97px;font-size:14.2px;line-height:14.2px;font-family:'Liberation Sans',sans-serif;font-weight:normal;font-style:normal;color:#000;">-</div>
<div class="t" style="left:1304.32px;top:468.10px;font-size:14.05px;line-height:14.05px;font-family:'Liberation Sans',sans-serif;font-weight:bold;font-style:normal;color:#000;">-</div>
<div class="t" style="left:28.43px;top:487.97px;font-size:14.2px;line-height:14.2px;font-family:'Liberation Sans',sans-serif;font-weight:normal;font-style:normal;color:#000;">11</div>
<div class="t" style="left:58.90px;top:487.97px;font-size:14.2px;line-height:14.2px;font-family:'Liberation Sans',sans-serif;font-weight:normal;font-style:normal;color:#000;">AL</div>
<div class="t" style="left:94.33px;top:487.97px;font-size:14.2px;line-height:14.2px;font-family:'Liberation Sans',sans-serif;font-weight:normal;font-style:normal;color:#000;">ECI</div>
<div class="t" style="left:137.60px;top:487.97px;font-size:14.2px;line-height:14.2px;font-family:'Liberation Sans',sans-serif;font-weight:normal;font-style:normal;color:#000;">Ken</div>
<div class="t" style="left:189.60px;top:487.97px;font-size:14.2px;line-height:14.2px;font-family:'Liberation Sans',sans-serif;font-weight:normal;font-style:normal;color:#000;">n M</div>
<div class="t" style="left:259.50px;top:487.97px;font-size:14.2px;line-height:14.2px;font-family:'Liberation Sans',sans-serif;font-weight:normal;font-style:normal;color:#000;">01/1</div>
<div class="t" style="left:286.76px;top:487.97px;font-size:14.2px;line-height:14.2px;font-family:'Liberation Sans',sans-serif;font-weight:normal;font-style:normal;color:#000;">3/1</div>
<div class="t" style="left:359.60px;top:487.97px;font-size:14.2px;line-height:14.2px;font-family:'Liberation Sans',sans-serif;font-weight:normal;font-style:normal;color:#000;">45</div>
<div class="t" style="left:430.33px;top:487.97px;font-size:14.2px;line-height:14.2px;font-family:'Liberation Sans',sans-serif;font-weight:normal;font-style:normal;color:#000;">23,332.00</div>
<div class="t" style="left:508.26px;top:487.97px;font-size:14.2px;line-height:14.2px;font-family:'Liberation Sans',sans-serif;font-weight:normal;font-style:normal;color:#000;">10/16/2003</div>
<div class="t" style="left:605.93px;top:487.97px;font-size:14.2px;line-height:14.2px;font-family:'Liberation Sans',sans-serif;font-weight:normal;font-style:normal;color:#000;">03/08/2006</div>
<div class="t" style="left:705.85px;top:489.11px;font-size:12.5px;line-height:12.5px;font-family:'Liberation Sans',sans-serif;font-weight:normal;font-style:normal;color:#000;">20</div>
<div class="t" style="left:759.34px;top:487.97px;font-size:14.2px;line-height:14.2px;font-family:'Liberation Sans',sans-serif;font-weight:normal;font-style:normal;color:#000;">145%</div>
<div class="t" style="left:833.18px;top:488.10px;font-size:14.05px;line-height:14.05px;font-family:'Liberation Sans',sans-serif;font-weight:bold;font-style:normal;color:#000;">799,617.23</div>
<div class="t" style="left:927.23px;top:487.97px;font-size:14.2px;line-height:14.2px;font-family:'Liberation Sans',sans-serif;font-weight:normal;font-style:normal;color:#000;">128.5</div>
<div class="t" style="left:992.23px;top:487.97px;font-size:14.2px;line-height:14.2px;font-family:'Liberation Sans',sans-serif;font-weight:normal;font-style:normal;color:#000;">247.3</div>
<div class="t" style="left:1060.68px;top:488.10px;font-size:14.05px;line-height:14.05px;font-family:'Liberation Sans',sans-serif;font-weight:bold;font-style:normal;color:#000;">343,818.77</div>
<div class="t" style="left:1202.27px;top:487.97px;font-size:14.2px;line-height:14.2px;font-family:'Liberation Sans',sans-serif;font-weight:normal;font-style:normal;color:#000;">-</div>
<div class="t" style="left:1241.06px;top:488.10px;font-size:14.05px;line-height:14.05px;font-family:'Liberation Sans',sans-serif;font-weight:bold;font-style:normal;color:#000;">1,143,436.00</div>
<div class="t" style="left:27.90px;top:507.97px;font-size:14.2px;line-height:14.2px;font-family:'Liberation Sans',sans-serif;font-weight:normal;font-style:normal;color:#000;">12</div>
<div class="t" style="left:58.90px;top:507.97px;font-size:14.2px;line-height:14.2px;font-family:'Liberation Sans',sans-serif;font-weight:normal;font-style:normal;color:#000;">AL</div>
<div class="t" style="left:90.65px;top:507.97px;font-size:14.2px;line-height:14.2px;font-family:'Liberation Sans',sans-serif;font-weight:normal;font-style:normal;color:#000;">NTA</div>
<div class="t" style="left:137.60px;top:507.97px;font-size:14.2px;line-height:14.2px;font-family:'Liberation Sans',sans-serif;font-weight:normal;font-style:normal;color:#000;">, Ma</div>
<div class="t" style="left:189.60px;top:507.97px;font-size:14.2px;line-height:14.2px;font-family:'Liberation Sans',sans-serif;font-weight:normal;font-style:normal;color:#000;">E.</div>
<div class="t" style="left:259.50px;top:507.97px;font-size:14.2px;line-height:14.2px;font-family:'Liberation Sans',sans-serif;font-weight:normal;font-style:normal;color:#000;">01/1</div>
<div class="t" style="left:286.76px;top:507.97px;font-size:14.2px;line-height:14.2px;font-family:'Liberation Sans',sans-serif;font-weight:normal;font-style:normal;color:#000;">9/1</div>
<div class="t" style="left:359.60px;top:507.97px;font-size:14.2px;line-height:14.2px;font-family:'Liberation Sans',sans-serif;font-weight:normal;font-style:normal;color:#000;">45</div>
<div class="t" style="left:430.33px;top:507.97px;font-size:14.2px;line-height:14.2px;font-family:'Liberation Sans',sans-serif;font-weight:normal;font-style:normal;color:#000;">23,236.00</div>
<div class="t" style="left:508.26px;top:507.97px;font-size:14.2px;line-height:14.2px;font-family:'Liberation Sans',sans-serif;font-weight:normal;font-style:normal;color:#000;">09/29/2022</div>
<div class="t" style="left:605.93px;top:507.97px;font-size:14.2px;line-height:14.2px;font-family:'Liberation Sans',sans-serif;font-weight:normal;font-style:normal;color:#000;">09/01/2023</div>
<div class="t" style="left:709.32px;top:509.11px;font-size:12.5px;line-height:12.5px;font-family:'Liberation Sans',sans-serif;font-weight:normal;font-style:normal;color:#000;">2</div>
<div class="t" style="left:767.24px;top:507.97px;font-size:14.2px;line-height:14.2px;font-family:'Liberation Sans',sans-serif;font-weight:normal;font-style:normal;color:#000;">0%</div>
<div class="t" style="left:884.72px;top:508.10px;font-size:14.05px;line-height:14.05px;font-family:'Liberation Sans',sans-serif;font-weight:bold;font-style:normal;color:#000;">-</div>
<div class="t" style="left:931.18px;top:507.97px;font-size:14.2px;line-height:14.2px;font-family:'Liberation Sans',sans-serif;font-weight:normal;font-style:normal;color:#000;">15.0</div>
<div class="t" style="left:1000.13px;top:507.97px;font-size:14.2px;line-height:14.2px;font-family:'Liberation Sans',sans-serif;font-weight:normal;font-style:normal;color:#000;">5.5</div>
<div class="t" style="left:1076.31px;top:508.10px;font-size:14.05px;line-height:14.05px;font-family:'Liberation Sans',sans-serif;font-weight:bold;font-style:normal;color:#000;">7,572.70</div>
<div class="t" style="left:1202.27px;top:507.97px;font-size:14.2px;line-height:14.2px;font-family:'Liberation Sans',sans-serif;font-weight:normal;font-style:normal;color:#000;">-</div>
<div class="t" style="left:1268.41px;top:508.10px;font-size:14.05px;line-height:14.05px;font-family:'Liberation Sans',sans-serif;font-weight:bold;font-style:normal;color:#000;">7,572.70</div>
<div class="t" style="left:27.90px;top:527.97px;font-size:14.2px;line-height:14.2px;font-family:'Liberation Sans',sans-serif;font-weight:normal;font-style:normal;color:#000;">13</div>
<div class="t" style="left:58.90px;top:527.97px;font-size:14.2px;line-height:14.2px;font-family:'Liberation Sans',sans-serif;font-weight:normal;font-style:normal;color:#000;">AL</div>
<div class="t" style="left:95.11px;top:527.97px;font-size:14.2px;line-height:14.2px;font-family:'Liberation Sans',sans-serif;font-weight:normal;font-style:normal;color:#000;">SE </div>
<div class="t" style="left:137.60px;top:527.97px;font-size:14.2px;line-height:14.2px;font-family:'Liberation Sans',sans-serif;font-weight:normal;font-style:normal;color:#000;">Roy</div>
<div class="t" style="left:259.50px;top:527.97px;font-size:14.2px;line-height:14.2px;font-family:'Liberation Sans',sans-serif;font-weight:normal;font-style:normal;color:#000;">01/1</div>
<div class="t" style="left:286.76px;top:527.97px;font-size:14.2px;line-height:14.2px;font-family:'Liberation Sans',sans-serif;font-weight:normal;font-style:normal;color:#000;">2/1</div>
<div class="t" style="left:359.60px;top:527.97px;font-size:14.2px;line-height:14.2px;font-family:'Liberation Sans',sans-serif;font-weight:normal;font-style:normal;color:#000;">35</div>
<div class="t" style="left:430.33px;top:527.97px;font-size:14.2px;line-height:14.2px;font-family:'Liberation Sans',sans-serif;font-weight:normal;font-style:normal;color:#000;">23,927.00</div>
<div class="t" style="left:508.26px;top:527.97px;font-size:14.2px;line-height:14.2px;font-family:'Liberation Sans',sans-serif;font-weight:normal;font-style:normal;color:#000;">08/02/2015</div>
<div class="t" style="left:605.93px;top:527.97px;font-size:14.2px;line-height:14.2px;font-family:'Liberation Sans',sans-serif;font-weight:normal;font-style:normal;color:#000;">02/03/2016</div>
<div class="t" style="left:705.85px;top:529.11px;font-size:12.5px;line-height:12.5px;font-family:'Liberation Sans',sans-serif;font-weight:normal;font-style:normal;color:#000;">10</div>
<div class="t" style="left:767.24px;top:527.97px;font-size:14.2px;line-height:14.2px;font-family:'Liberation Sans',sans-serif;font-weight:normal;font-style:normal;color:#000;">0%</div>
<div class="t" style="left:884.72px;top:528.10px;font-size:14.05px;line-height:14.05px;font-family:'Liberation Sans',sans-serif;font-weight:bold;font-style:normal;color:#000;">-</div>
<div class="t" style="left:931.18px;top:527.97px;font-size:14.2px;line-height:14.2px;font-family:'Liberation Sans',sans-serif;font-weight:normal;font-style:normal;color:#000;">78.5</div>
<div class="t" style="left:992.76px;top:527.97px;font-size:14.2px;line-height:14.2px;font-family:'Liberation Sans',sans-serif;font-weight:normal;font-style:normal;color:#000;">114.0</div>
<div class="t" style="left:1060.68px;top:528.10px;font-size:14.05px;line-height:14.05px;font-family:'Liberation Sans',sans-serif;font-weight:bold;font-style:normal;color:#000;">100,798.78</div>
<div class="t" style="left:1202.27px;top:527.97px;font-size:14.2px;line-height:14.2px;font-family:'Liberation Sans',sans-serif;font-weight:normal;font-style:normal;color:#000;">-</div>
<div class="t" style="left:1252.78px;top:528.10px;font-size:14.05px;line-height:14.05px;font-family:'Liberation Sans',sans-serif;font-weight:bold;font-style:normal;color:#000;">100,798.78</div>
<div class="t" style="left:27.90px;top:547.97px;font-size:14.2px;line-height:14.2px;font-family:'Liberation Sans',sans-serif;font-weight:normal;font-style:normal;color:#000;">14</div>
<div class="t" style="left:58.90px;top:547.97px;font-size:14.2px;line-height:14.2px;font-family:'Liberation Sans',sans-serif;font-weight:normal;font-style:normal;color:#000;">AL</div>
<div class="t" style="left:96.70px;top:547.97px;font-size:14.2px;line-height:14.2px;font-family:'Liberation Sans',sans-serif;font-weight:normal;font-style:normal;color:#000;">ON</div>
<div class="t" style="left:137.60px;top:547.97px;font-size:14.2px;line-height:14.2px;font-family:'Liberation Sans',sans-serif;font-weight:normal;font-style:normal;color:#000;">ram</div>
<div class="t" style="left:259.50px;top:547.97px;font-size:14.2px;line-height:14.2px;font-family:'Liberation Sans',sans-serif;font-weight:normal;font-style:normal;color:#000;">01/1</div>
<div class="t" style="left:286.76px;top:547.97px;font-size:14.2px;line-height:14.2px;font-family:'Liberation Sans',sans-serif;font-weight:normal;font-style:normal;color:#000;">3/1</div>
<div class="t" style="left:359.60px;top:547.97px;font-size:14.2px;line-height:14.2px;font-family:'Liberation Sans',sans-serif;font-weight:normal;font-style:normal;color:#000;">25</div>
<div class="t" style="left:430.33px;top:547.97px;font-size:14.2px;line-height:14.2px;font-family:'Liberation Sans',sans-serif;font-weight:normal;font-style:normal;color:#000;">23,236.00</div>
<div class="t" style="left:508.26px;top:547.97px;font-size:14.2px;line-height:14.2px;font-family:'Liberation Sans',sans-serif;font-weight:normal;font-style:normal;color:#000;">04/01/2022</div>
<div class="t" style="left:605.93px;top:547.97px;font-size:14.2px;line-height:14.2px;font-family:'Liberation Sans',sans-serif;font-weight:normal;font-style:normal;color:#000;">10/16/2022</div>
<div class="t" style="left:709.32px;top:549.11px;font-size:12.5px;line-height:12.5px;font-family:'Liberation Sans',sans-serif;font-weight:normal;font-style:normal;color:#000;">3</div>
<div class="t" style="left:767.24px;top:547.97px;font-size:14.2px;line-height:14.2px;font-family:'Liberation Sans',sans-serif;font-weight:normal;font-style:normal;color:#000;">0%</div>
<div class="t" style="left:884.72px;top:548.10px;font-size:14.05px;line-height:14.05px;font-family:'Liberation Sans',sans-serif;font-weight:bold;font-style:normal;color:#000;">-</div>
<div class="t" style="left:931.18px;top:547.97px;font-size:14.2px;line-height:14.2px;font-family:'Liberation Sans',sans-serif;font-weight:normal;font-style:normal;color:#000;">24.4</div>
<div class="t" style="left:996.18px;top:547.97px;font-size:14.2px;line-height:14.2px;font-family:'Liberation Sans',sans-serif;font-weight:normal;font-style:normal;color:#000;">31.4</div>
<div class="t" style="left:1068.49px;top:548.10px;font-size:14.05px;line-height:14.05px;font-family:'Liberation Sans',sans-serif;font-weight:bold;font-style:normal;color:#000;">20,597.74</div>
<div class="t" style="left:1202.27px;top:547.97px;font-size:14.2px;line-height:14.2px;font-family:'Liberation Sans',sans-serif;font-weight:normal;font-style:normal;color:#000;">-</div>
<div class="t" style="left:1260.59px;top:548.10px;font-size:14.05px;line-height:14.05px;font-family:'Liberation Sans',sans-serif;font-weight:bold;font-style:normal;color:#000;">20,597.74</div>
<div class="t" style="left:27.90px;top:567.97px;font-size:14.2px;line-height:14.2px;font-family:'Liberation Sans',sans-serif;font-weight:normal;font-style:normal;color:#000;">15</div>
<div class="t" style="left:58.90px;top:567.97px;font-size:14.2px;line-height:14.2px;font-family:'Liberation Sans',sans-serif;font-weight:normal;font-style:normal;color:#000;">AL</div>
<div class="t" style="left:89.60px;top:567.97px;font-size:14.2px;line-height:14.2px;font-family:'Liberation Sans',sans-serif;font-weight:normal;font-style:normal;color:#000;">REZ</div>
<div class="t" style="left:137.60px;top:567.97px;font-size:14.2px;line-height:14.2px;font-family:'Liberation Sans',sans-serif;font-weight:normal;font-style:normal;color:#000;">fren</div>
<div class="t" style="left:259.50px;top:567.97px;font-size:14.2px;line-height:14.2px;font-family:'Liberation Sans',sans-serif;font-weight:normal;font-style:normal;color:#000;">01/1</div>
<div class="t" style="left:286.76px;top:567.97px;font-size:14.2px;line-height:14.2px;font-family:'Liberation Sans',sans-serif;font-weight:normal;font-style:normal;color:#000;">1/1</div>
<div class="t" style="left:359.60px;top:567.97px;font-size:14.2px;line-height:14.2px;font-family:'Liberation Sans',sans-serif;font-weight:normal;font-style:normal;color:#000;">55</div>
<div class="t" style="left:430.33px;top:567.97px;font-size:14.2px;line-height:14.2px;font-family:'Liberation Sans',sans-serif;font-weight:normal;font-style:normal;color:#000;">23,236.00</div>
<div class="t" style="left:508.26px;top:567.97px;font-size:14.2px;line-height:14.2px;font-family:'Liberation Sans',sans-serif;font-weight:normal;font-style:normal;color:#000;">09/29/2022</div>
<div class="t" style="left:605.93px;top:567.97px;font-size:14.2px;line-height:14.2px;font-family:'Liberation Sans',sans-serif;font-weight:normal;font-style:normal;color:#000;">09/01/2023</div>
<div class="t" style="left:709.32px;top:569.11px;font-size:12.5px;line-height:12.5px;font-family:'Liberation Sans',sans-serif;font-weight:normal;font-style:normal;color:#000;">2</div>
<div class="t" style="left:767.24px;top:567.97px;font-size:14.2px;line-height:14.2px;font-family:'Liberation Sans',sans-serif;font-weight:normal;font-style:normal;color:#000;">0%</div>
<div class="t" style="left:884.72px;top:568.10px;font-size:14.05px;line-height:14.05px;font-family:'Liberation Sans',sans-serif;font-weight:bold;font-style:normal;color:#000;">-</div>
<div class="t" style="left:931.18px;top:567.97px;font-size:14.2px;line-height:14.2px;font-family:'Liberation Sans',sans-serif;font-weight:normal;font-style:normal;color:#000;">15.0</div>
<div class="t" style="left:996.18px;top:567.97px;font-size:14.2px;line-height:14.2px;font-family:'Liberation Sans',sans-serif;font-weight:normal;font-style:normal;color:#000;">13.0</div>
<div class="t" style="left:1068.49px;top:568.10px;font-size:14.05px;line-height:14.05px;font-family:'Liberation Sans',sans-serif;font-weight:bold;font-style:normal;color:#000;">10,343.20</div>
<div class="t" style="left:1202.27px;top:567.97px;font-size:14.2px;line-height:14.2px;font-family:'Liberation Sans',sans-serif;font-weight:normal;font-style:normal;color:#000;">-</div>
<div class="t" style="left:1260.59px;top:568.10px;font-size:14.05px;line-height:14.05px;font-family:'Liberation Sans',sans-serif;font-weight:bold;font-style:normal;color:#000;">10,343.20</div>
<div class="t" style="left:27.90px;top:587.97px;font-size:14.2px;line-height:14.2px;font-family:'Liberation Sans',sans-serif;font-weight:normal;font-style:normal;color:#000;">16</div>
<div class="t" style="left:58.90px;top:587.97px;font-size:14.2px;line-height:14.2px;font-family:'Liberation Sans',sans-serif;font-weight:normal;font-style:normal;color:#000;">AM</div>
<div class="t" style="left:83.28px;top:587.97px;font-size:14.2px;line-height:14.2px;font-family:'Liberation Sans',sans-serif;font-weight:normal;font-style:normal;color:#000;">GUIS</div>
<div class="t" style="left:137.60px;top:587.97px;font-size:14.2px;line-height:14.2px;font-family:'Liberation Sans',sans-serif;font-weight:normal;font-style:normal;color:#000;">onat</div>
<div class="t" style="left:189.60px;top:587.97px;font-size:14.2px;line-height:14.2px;font-family:'Liberation Sans',sans-serif;font-weight:normal;font-style:normal;color:#000;"> R.</div>
<div class="t" style="left:259.50px;top:587.97px;font-size:14.2px;line-height:14.2px;font-family:'Liberation Sans',sans-serif;font-weight:normal;font-style:normal;color:#000;">01/1</div>
<div class="t" style="left:286.76px;top:587.97px;font-size:14.2px;line-height:14.2px;font-family:'Liberation Sans',sans-serif;font-weight:normal;font-style:normal;color:#000;">6/1</div>
<div class="t" style="left:359.60px;top:587.97px;font-size:14.2px;line-height:14.2px;font-family:'Liberation Sans',sans-serif;font-weight:normal;font-style:normal;color:#000;">55</div>
<div class="t" style="left:430.33px;top:587.97px;font-size:14.2px;line-height:14.2px;font-family:'Liberation Sans',sans-serif;font-weight:normal;font-style:normal;color:#000;">23,632.00</div>
<div class="t" style="left:508.26px;top:587.97px;font-size:14.2px;line-height:14.2px;font-family:'Liberation Sans',sans-serif;font-weight:normal;font-style:normal;color:#000;">10/01/1995</div>
<div class="t" style="left:605.93px;top:587.97px;font-size:14.2px;line-height:14.2px;font-family:'Liberation Sans',sans-serif;font-weight:normal;font-style:normal;color:#000;">07/02/2002</div>
<div class="t" style="left:705.85px;top:589.11px;font-size:12.5px;line-height:12.5px;font-family:'Liberation Sans',sans-serif;font-weight:normal;font-style:normal;color:#000;">23</div>
<div class="t" style="left:759.34px;top:587.97px;font-size:14.2px;line-height:14.2px;font-family:'Liberation Sans',sans-serif;font-weight:normal;font-style:normal;color:#000;">165%</div>
<div class="t" style="left:833.18px;top:588.10px;font-size:14.05px;line-height:14.05px;font-family:'Liberation Sans',sans-serif;font-weight:bold;font-style:normal;color:#000;">412,207.07</div>
<div class="t" style="left:927.23px;top:587.97px;font-size:14.2px;line-height:14.2px;font-family:'Liberation Sans',sans-serif;font-weight:normal;font-style:normal;color:#000;">105.0</div>
<div class="t" style="left:992.23px;top:587.97px;font-size:14.2px;line-height:14.2px;font-family:'Liberation Sans',sans-serif;font-weight:normal;font-style:normal;color:#000;">253.5</div>
<div class="t" style="left:1060.68px;top:588.10px;font-size:14.05px;line-height:14.05px;font-family:'Liberation Sans',sans-serif;font-weight:bold;font-style:normal;color:#000;">125,296.20</div>
<div class="t" style="left:1159.43px;top:587.97px;font-size:14.2px;line-height:14.2px;font-family:'Liberation Sans',sans-serif;font-weight:normal;font-style:normal;color:#000;">24,422.97</div>
<div class="t" style="left:1252.78px;top:588.10px;font-size:14.05px;line-height:14.05px;font-family:'Liberation Sans',sans-serif;font-weight:bold;font-style:normal;color:#000;">513,080.30</div>
<div class="t" style="left:27.90px;top:607.97px;font-size:14.2px;line-height:14.2px;font-family:'Liberation Sans',sans-serif;font-weight:normal;font-style:normal;color:#000;">17</div>
<div class="t" style="left:58.90px;top:607.97px;font-size:14.2px;line-height:14.2px;font-family:'Liberation Sans',sans-serif;font-weight:normal;font-style:normal;color:#000;">AM</div>
<div class="t" style="left:89.59px;top:607.97px;font-size:14.2px;line-height:14.2px;font-family:'Liberation Sans',sans-serif;font-weight:normal;font-style:normal;color:#000;">LGA</div>
<div class="t" style="left:137.60px;top:607.97px;font-size:14.2px;line-height:14.2px;font-family:'Liberation Sans',sans-serif;font-weight:normal;font-style:normal;color:#000;">A, R</div>
<div class="t" style="left:189.60px;top:607.97px;font-size:14.2px;line-height:14.2px;font-family:'Liberation Sans',sans-serif;font-weight:normal;font-style:normal;color:#000;">iart</div>
<div class="t" style="left:259.50px;top:607.97px;font-size:14.2px;line-height:14.2px;font-family:'Liberation Sans',sans-serif;font-weight:normal;font-style:normal;color:#000;">01/1</div>
<div class="t" style="left:286.76px;top:607.97px;font-size:14.2px;line-height:14.2px;font-family:'Liberation Sans',sans-serif;font-weight:normal;font-style:normal;color:#000;">4/1</div>
<div class="t" style="left:359.60px;top:607.97px;font-size:14.2px;line-height:14.2px;font-family:'Liberation Sans',sans-serif;font-weight:normal;font-style:normal;color:#000;">25</div>
<div class="t" style="left:430.33px;top:607.97px;font-size:14.2px;line-height:14.2px;font-family:'Liberation Sans',sans-serif;font-weight:normal;font-style:normal;color:#000;">23,236.00</div>
<div class="t" style="left:508.79px;top:607.97px;font-size:14.2px;line-height:14.2px;font-family:'Liberation Sans',sans-serif;font-weight:normal;font-style:normal;color:#000;">01/11/2023</div>
<div class="t" style="left:605.93px;top:607.97px;font-size:14.2px;line-height:14.2px;font-family:'Liberation Sans',sans-serif;font-weight:normal;font-style:normal;color:#000;">10/01/2023</div>
<div class="t" style="left:709.32px;top:609.11px;font-size:12.5px;line-height:12.5px;font-family:'Liberation Sans',sans-serif;font-weight:normal;font-style:normal;color:#000;">2</div>
<div class="t" style="left:767.24px;top:607.97px;font-size:14.2px;line-height:14.2px;font-family:'Liberation Sans',sans-serif;font-weight:normal;font-style:normal;color:#000;">0%</div>
<div class="t" style="left:884.72px;top:608.10px;font-size:14.05px;line-height:14.05px;font-family:'Liberation Sans',sans-serif;font-weight:bold;font-style:normal;color:#000;">-</div>
<div class="t" style="left:931.18px;top:607.97px;font-size:14.2px;line-height:14.2px;font-family:'Liberation Sans',sans-serif;font-weight:normal;font-style:normal;color:#000;">13.8</div>
<div class="t" style="left:996.71px;top:607.97px;font-size:14.2px;line-height:14.2px;font-family:'Liberation Sans',sans-serif;font-weight:normal;font-style:normal;color:#000;">11.8</div>
<div class="t" style="left:1076.31px;top:608.10px;font-size:14.05px;line-height:14.05px;font-family:'Liberation Sans',sans-serif;font-weight:bold;font-style:normal;color:#000;">9,419.70</div>
<div class="t" style="left:1202.27px;top:607.97px;font-size:14.2px;line-height:14.2px;font-family:'Liberation Sans',sans-serif;font-weight:normal;font-style:normal;color:#000;">-</div>
<div class="t" style="left:1268.41px;top:608.10px;font-size:14.05px;line-height:14.05px;font-family:'Liberation Sans',sans-serif;font-weight:bold;font-style:normal;color:#000;">9,419.70</div>
<div class="t" style="left:27.90px;top:627.97px;font-size:14.2px;line-height:14.2px;font-family:'Liberation Sans',sans-serif;font-weight:normal;font-style:normal;color:#000;">18</div>
<div class="t" style="left:58.90px;top:627.97px;font-size:14.2px;line-height:14.2px;font-family:'Liberation Sans',sans-serif;font-weight:normal;font-style:normal;color:#000;">AM</div>
<div class="t" style="left:99.07px;top:627.97px;font-size:14.2px;line-height:14.2px;font-family:'Liberation Sans',sans-serif;font-weight:normal;font-style:normal;color:#000;">, JI</div>
<div class="t" style="left:137.60px;top:627.97px;font-size:14.2px;line-height:14.2px;font-family:'Liberation Sans',sans-serif;font-weight:normal;font-style:normal;color:#000;">Rodo</div>
<div class="t" style="left:189.60px;top:627.97px;font-size:14.2px;line-height:14.2px;font-family:'Liberation Sans',sans-serif;font-weight:normal;font-style:normal;color:#000;">B.</div>
<div class="t" style="left:259.50px;top:627.97px;font-size:14.2px;line-height:14.2px;font-family:'Liberation Sans',sans-serif;font-weight:normal;font-style:normal;color:#000;">01/1</div>
<div class="t" style="left:286.76px;top:627.97px;font-size:14.2px;line-height:14.2px;font-family:'Liberation Sans',sans-serif;font-weight:normal;font-style:normal;color:#000;">3/1</div>
<div class="t" style="left:359.60px;top:627.97px;font-size:14.2px;line-height:14.2px;font-family:'Liberation Sans',sans-serif;font-weight:normal;font-style:normal;color:#000;">55</div>
<div class="t" style="left:430.33px;top:627.97px;font-size:14.2px;line-height:14.2px;font-family:'Liberation Sans',sans-serif;font-weight:normal;font-style:normal;color:#000;">23,236.00</div>
<div class="t" style="left:508.26px;top:627.97px;font-size:14.2px;line-height:14.2px;font-family:'Liberation Sans',sans-serif;font-weight:normal;font-style:normal;color:#000;">02/01/2010</div>
<div class="t" style="left:606.98px;top:627.97px;font-size:14.2px;line-height:14.2px;font-family:'Liberation Sans',sans-serif;font-weight:normal;font-style:normal;color:#000;">01/01/2011</div>
<div class="t" style="left:705.85px;top:629.11px;font-size:12.5px;line-height:12.5px;font-family:'Liberation Sans',sans-serif;font-weight:normal;font-style:normal;color:#000;">15</div>
<div class="t" style="left:759.34px;top:627.97px;font-size:14.2px;line-height:14.2px;font-family:'Liberation Sans',sans-serif;font-weight:normal;font-style:normal;color:#000;">125%</div>
<div class="t" style="left:833.18px;top:628.10px;font-size:14.05px;line-height:14.05px;font-family:'Liberation Sans',sans-serif;font-weight:bold;font-style:normal;color:#000;">210,675.00</div>
<div class="t" style="left:927.23px;top:627.97px;font-size:14.2px;line-height:14.2px;font-family:'Liberation Sans',sans-serif;font-weight:normal;font-style:normal;color:#000;">120.5</div>
<div class="t" style="left:992.23px;top:627.97px;font-size:14.2px;line-height:14.2px;font-family:'Liberation Sans',sans-serif;font-weight:normal;font-style:normal;color:#000;">179.5</div>
<div class="t" style="left:1061.45px;top:628.10px;font-size:14.05px;line-height:14.05px;font-family:'Liberation Sans',sans-serif;font-weight:bold;font-style:normal;color:#000;">110,820.00</div>
<div class="t" style="left:1202.27px;top:627.97px;font-size:14.2px;line-height:14.2px;font-family:'Liberation Sans',sans-serif;font-weight:normal;font-style:normal;color:#000;">-</div>
<div class="t" style="left:1252.78px;top:628.10px;font-size:14.05px;line-height:14.05px;font-family:'Liberation Sans',sans-serif;font-weight:bold;font-style:normal;color:#000;">321,495.00</div>
<div class="t" style="left:27.90px;top:647.97px;font-size:14.2px;line-height:14.2px;font-family:'Liberation Sans',sans-serif;font-weight:normal;font-style:normal;color:#000;">19</div>
<div class="t" style="left:58.90px;top:647.97px;font-size:14.2px;line-height:14.2px;font-family:'Liberation Sans',sans-serif;font-weight:normal;font-style:normal;color:#000;">AM</div>
<div class="t" style="left:96.95px;top:647.97px;font-size:14.2px;line-height:14.2px;font-family:'Liberation Sans',sans-serif;font-weight:normal;font-style:normal;color:#000;">YA </div>
<div class="t" style="left:137.60px;top:647.97px;font-size:14.2px;line-height:14.2px;font-family:'Liberation Sans',sans-serif;font-weight:normal;font-style:normal;color:#000;">orn</div>
<div class="t" style="left:189.60px;top:647.97px;font-size:14.2px;line-height:14.2px;font-family:'Liberation Sans',sans-serif;font-weight:normal;font-style:normal;color:#000;">G.</div>
<div class="t" style="left:259.50px;top:647.97px;font-size:14.2px;line-height:14.2px;font-family:'Liberation Sans',sans-serif;font-weight:normal;font-style:normal;color:#000;">01/1</div>
<div class="t" style="left:286.76px;top:647.97px;font-size:14.2px;line-height:14.2px;font-family:'Liberation Sans',sans-serif;font-weight:normal;font-style:normal;color:#000;">7/1</div>
<div class="t" style="left:359.60px;top:647.97px;font-size:14.2px;line-height:14.2px;font-family:'Liberation Sans',sans-serif;font-weight:normal;font-style:normal;color:#000;">35</div>
<div class="t" style="left:430.33px;top:647.97px;font-size:14.2px;line-height:14.2px;font-family:'Liberation Sans',sans-serif;font-weight:normal;font-style:normal;color:#000;">23,919.00</div>
<div class="t" style="left:508.26px;top:647.97px;font-size:14.2px;line-height:14.2px;font-family:'Liberation Sans',sans-serif;font-weight:normal;font-style:normal;color:#000;">05/04/2009</div>
<div class="t" style="left:606.98px;top:647.97px;font-size:14.2px;line-height:14.2px;font-family:'Liberation Sans',sans-serif;font-weight:normal;font-style:normal;color:#000;">01/01/2011</div>
<div class="t" style="left:705.85px;top:649.11px;font-size:12.5px;line-height:12.5px;font-family:'Liberation Sans',sans-serif;font-weight:normal;font-style:normal;color:#000;">15</div>
<div class="t" style="left:759.34px;top:647.97px;font-size:14.2px;line-height:14.2px;font-family:'Liberation Sans',sans-serif;font-weight:normal;font-style:normal;color:#000;">125%</div>
<div class="t" style="left:833.18px;top:648.10px;font-size:14.05px;line-height:14.05px;font-family:'Liberation Sans',sans-serif;font-weight:bold;font-style:normal;color:#000;">242,231.25</div>
<div class="t" style="left:927.23px;top:647.97px;font-size:14.2px;line-height:14.2px;font-family:'Liberation Sans',sans-serif;font-weight:normal;font-style:normal;color:#000;">168.0</div>
<div class="t" style="left:992.23px;top:647.97px;font-size:14.2px;line-height:14.2px;font-family:'Liberation Sans',sans-serif;font-weight:normal;font-style:normal;color:#000;">159.5</div>
<div class="t" style="left:1060.68px;top:648.10px;font-size:14.05px;line-height:14.05px;font-family:'Liberation Sans',sans-serif;font-weight:bold;font-style:normal;color:#000;">139,099.08</div>
<div class="t" style="left:1202.27px;top:647.97px;font-size:14.2px;line-height:14.2px;font-family:'Liberation Sans',sans-serif;font-weight:normal;font-style:normal;color:#000;">-</div>
<div class="t" style="left:1252.78px;top:648.10px;font-size:14.05px;line-height:14.05px;font-family:'Liberation Sans',sans-serif;font-weight:bold;font-style:normal;color:#000;">381,330.33</div>
<div style="left:73.3px;top:285px;width:25.400000000000006px;height:376px;background:#fff"></div>
<div style="left:115px;top:285px;width:25.400000000000006px;height:376px;background:#fff"></div>
<div style="left:164.5px;top:285px;width:25.099999999999994px;height:376px;background:#fff"></div>
<div style="left:263px;top:285px;width:26px;height:376px;background:#fff"></div>
<div style="left:306.9px;top:285px;width:26.100000000000023px;height:376px;background:#fff"></div>
<div style="left:363.9px;top:285px;width:11.100000000000023px;height:376px;background:#fff"></div>
<div style="left:422.9px;top:285px;width:30.0px;height:376px;background:#fff"></div>
<div style="left:678.5px;top:283px;width:67.5px;height:22px;border:2px solid #217346;box-sizing:border-box"></div>
<div style="left:742.5px;top:302px;width:5px;height:5px;background:#217346;border:1px solid #fff"></div>
<div style="left:1333px;top:167px;width:21px;height:494px;background:#eeeae8"></div>
<div style="left:1336.5px;top:167.5px;width:15.5px;height:493px;background:#f6f5f4;border-radius:8px"></div>
<div style="left:1340.4px;top:184px;width:8.6px;height:29px;background:#767676;border-radius:4.3px"></div>
<div style="left:0px;top:661px;width:1354px;height:31.5px;background:#ece8e5"></div>
<div style="left:96px;top:661px;width:120px;height:8px;background:#fff"></div>
<div style="left:0px;top:661px;width:104.6px;height:31.5px;background:#ece8e5;border-top-right-radius:7px"></div>
<div style="left:207px;top:661px;width:1147px;height:31.5px;background:#ece8e5;border-top-left-radius:7px"></div>
<div style="left:104.6px;top:661px;width:102.4px;height:28.2px;background:#fff;border-radius:0 0 6px 6px"></div>
<div class="t" style="left:113.60px;top:667.93px;font-size:13.3px;line-height:13.3px;font-family:'Liberation Sans',sans-serif;font-weight:normal;font-style:normal;color:#242424;">CUMULATIVE</div>
<div style="left:113.6px;top:683.8px;width:85.1px;height:2.2px;background:#107c41;border-radius:1px"></div>
<div style="left:216.4px;top:665.3px;width:127.1px;height:23.7px;background:#e3700b;border-radius:5px"></div>
<div class="t" style="left:225.30px;top:670.93px;font-size:13.3px;line-height:13.3px;font-family:'Liberation Sans',sans-serif;font-weight:normal;font-style:normal;color:#fff;transform:scaleX(0.9468);transform-origin:0 0;">1-YR BASED_2025</div>
<div class="t" style="left:361.20px;top:670.93px;font-size:13.3px;line-height:13.3px;font-family:'Liberation Sans',sans-serif;font-weight:normal;font-style:normal;color:#242424;transform:scaleX(0.9821);transform-origin:0 0;">Sheet3</div>
<div style="left:211px;top:668px;width:1px;height:17px;background:#c8c6c4"></div>
<div style="left:348.5px;top:668px;width:1px;height:17px;background:#c8c6c4"></div>
<div style="left:416.4px;top:668px;width:1px;height:17px;background:#c8c6c4"></div>
<div style="left:0px;top:692.5px;width:1354px;height:15.5px;background:#f3f2f1"></div>
<div class="t" style="left:1.00px;top:700.34px;font-size:12px;line-height:12px;font-family:'Liberation Sans',sans-serif;font-weight:normal;font-style:normal;color:#242424;transform:scaleX(0.8648);transform-origin:0 0;">Ready</div>
<div class="t" style="left:70.00px;top:700.34px;font-size:12px;line-height:12px;font-family:'Liberation Sans',sans-serif;font-weight:bold;font-style:normal;color:#242424;transform:scaleX(0.8689);transform-origin:0 0;">Accessibility: Investigate</div>
<div style="left:1055px;top:692.5px;width:39.5px;height:15.5px;background:#dcdcdc"></div>
<div class="t" style="left:1320.60px;top:700.34px;font-size:12px;line-height:12px;font-family:'Liberation Sans',sans-serif;font-weight:normal;font-style:normal;color:#242424;transform:scaleX(0.8699);transform-origin:0 0;">102%</div>
<svg style="position:absolute;left:0px;top:0px;pointer-events:none" width="1354" height="708" viewBox="0 0 1354 708"><path d="M23.5 672.4L17.8 676.8L23.5 681.2M50.2 672.4L55.9 676.8L50.2 681.2" fill="none" stroke="#8a8886" stroke-width="1.1"/><path d="M464.6 671V682.5M458.8 676.8H470.4" stroke="#3b3b3b" stroke-width="1.1"/><circle cx="811" cy="673.8" r="1.1" fill="#242424"/><circle cx="811" cy="678" r="1.1" fill="#242424"/><circle cx="811" cy="682.3" r="1.1" fill="#242424"/><rect x="827" y="668.3" width="506.5" height="16.4" rx="8.2" fill="#f6f5f4"/><path d="M839 671.8V680.9L832 676.35z" fill="#767676"/><rect x="843.8" y="671.8" width="319.1" height="9.1" rx="4.55" fill="#767676"/><path d="M1322 671.8V680.9L1329.4 676.35z" fill="#767676"/><path d="M1340.4 179.2H1349L1344.7 172.4z" fill="#767676"/><path d="M1340.4 649.6H1349L1344.7 656.4z" fill="#767676"/><g fill="none" stroke="#242424" stroke-width="1"><circle cx="57.6" cy="699" r="1.8"/><path d="M52 701.2c2 .8 9.3.8 11.3 0M57.6 701.5v3.5l-3 4M57.6 705l3 4"/></g><g fill="none" stroke="#3b3b3b" stroke-width="1"><rect x="1068.3" y="697.5" width="12.5" height="12"/><path d="M1072.5 697.5V709.5M1076.6 697.5V709.5M1068.3 701.5H1080.8M1068.3 705.5H1080.8"/><rect x="1107.8" y="697.5" width="14" height="12"/><rect x="1110.8" y="700.5" width="8" height="9"/><path d="M1112.5 703H1117M1112.5 705.5H1117"/><path d="M1148.3 709V697.5H1161.3V709M1152.5 697.5V703H1157V697.5"/></g><path d="M1180.3 703H1188.4M1194.2 703H1294M1298.6 703H1306.7M1302.65 699V707" stroke="#3b3b3b" stroke-width="1"/><rect x="1241.8" y="699" width="5" height="10" fill="#3b3b3b"/></svg>
</body></html>
